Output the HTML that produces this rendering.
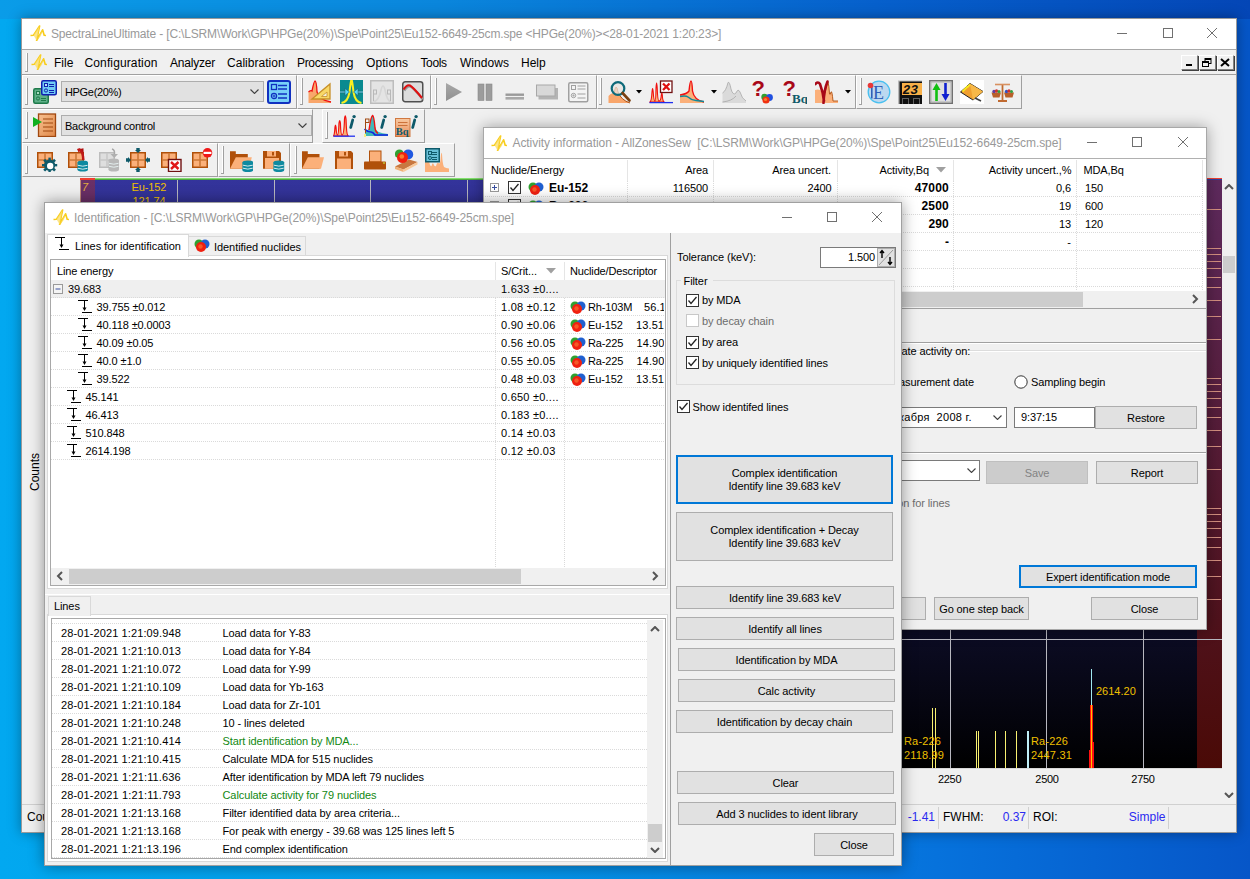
<!DOCTYPE html><html><head><meta charset="utf-8"><style>
html,body{margin:0;padding:0;}body{width:1250px;height:879px;overflow:hidden;position:relative;font-family:"Liberation Sans",sans-serif;background:linear-gradient(90deg,#02a8f0 0%,#049ae8 35%,#0672dc 75%,#0656c8 100%);}
div,span,svg{position:absolute;box-sizing:border-box;}span{white-space:pre;}
</style></head><body>
<div style="left:0;top:0;width:1250px;height:19px;background:linear-gradient(90deg,#0a9ce8 0%,#0a86dc 35%,#0660cc 70%,#0446b6 100%)"></div>
<div style="left:21px;top:18px;width:1216px;height:815px;background:#f0f0f0;box-shadow:0 0 12px rgba(0,0,0,0.35)"></div>
<div style="left:21px;top:18px;width:1216px;height:815px;border:1px solid #9a9a9a;box-sizing:border-box;background:transparent"></div>
<div style="left:22px;top:19px;width:1214px;height:30px;background:#fff"></div>
<div style="left:22px;top:49px;width:1214px;height:1px;background:#a8a8a8"></div>
<svg style="left:30px;top:25px;" width="16" height="16" viewBox="0 0 16 16"><path d="M0.5 10.5 L3.5 10.2 L9.6 1 L6.6 15.5 L12.6 4.8 L14.2 10.2 L16 10.5" fill="none" stroke="#f8cc18" stroke-width="1.6" stroke-linejoin="round"/><path d="M3.5 10.2 L9.6 1 L6.6 15.5 Z" fill="#fbe070" fill-opacity="0.8"/><path d="M6.6 15.5 L12.6 4.8 L11 11 Z" fill="#fbe070" fill-opacity="0.6"/></svg>
<span style="left:51.00px;top:27.00px;font-size:12px;line-height:14px;color:#999999;letter-spacing:-0.159px;">SpectraLineUltimate - [C:\LSRM\Work\GP\HPGe(20%)\Spe\Point25\Eu152-6649-25cm.spe &lt;HPGe(20%)&gt;&lt;28-01-2021 1:20:23&gt;]</span>
<svg style="left:1117px;top:33px;" width="11" height="2" viewBox="0 0 11 2"><path d="M0 0.5 H10" stroke="#707070" stroke-width="1"/></svg>
<svg style="left:1163px;top:28px;" width="11" height="11" viewBox="0 0 11 11"><rect x="0.5" y="0.5" width="9" height="9" fill="none" stroke="#707070" stroke-width="1"/></svg>
<svg style="left:1207px;top:28px;" width="11" height="11" viewBox="0 0 11 11"><path d="M0 0 L10 10 M10 0 L0 10" stroke="#707070" stroke-width="1"/></svg>
<div style="left:22px;top:50px;width:1214px;height:24px;background:#f0f0f0"></div>
<div style="left:22px;top:74px;width:1214px;height:1px;background:#a0a0a0"></div>
<div style="left:26px;top:53px;width:1px;height:19px;background:#ffffff"></div>
<div style="left:27px;top:53px;width:1px;height:19px;background:#a0a0a0"></div>
<div style="left:25px;top:71px;width:3px;height:1px;background:#a0a0a0"></div>
<svg style="left:31px;top:54px;" width="16" height="16" viewBox="0 0 16 16"><path d="M0.5 10.5 L3.5 10.2 L9.6 1 L6.6 15.5 L12.6 4.8 L14.2 10.2 L16 10.5" fill="none" stroke="#f8cc18" stroke-width="1.6" stroke-linejoin="round"/><path d="M3.5 10.2 L9.6 1 L6.6 15.5 Z" fill="#fbe070" fill-opacity="0.8"/><path d="M6.6 15.5 L12.6 4.8 L11 11 Z" fill="#fbe070" fill-opacity="0.6"/></svg>
<span style="left:54.00px;top:56.00px;font-size:12px;line-height:14px;color:#000;letter-spacing:0.039px;">File</span>
<span style="left:84.50px;top:56.00px;font-size:12px;line-height:14px;color:#000;letter-spacing:0.125px;">Configuration</span>
<span style="left:170.00px;top:56.00px;font-size:12px;line-height:14px;color:#000;letter-spacing:-0.211px;">Analyzer</span>
<span style="left:227.00px;top:56.00px;font-size:12px;line-height:14px;color:#000;letter-spacing:0.020px;">Calibration</span>
<span style="left:297.00px;top:56.00px;font-size:12px;line-height:14px;color:#000;letter-spacing:-0.336px;">Processing</span>
<span style="left:366.00px;top:56.00px;font-size:12px;line-height:14px;color:#000;letter-spacing:0.094px;">Options</span>
<span style="left:420.50px;top:56.00px;font-size:12px;line-height:14px;color:#000;letter-spacing:-0.383px;">Tools</span>
<span style="left:460.00px;top:56.00px;font-size:12px;line-height:14px;color:#000;letter-spacing:0.045px;">Windows</span>
<span style="left:521.00px;top:56.00px;font-size:12px;line-height:14px;color:#000;letter-spacing:-0.022px;">Help</span>
<div style="left:1181px;top:55px;width:17px;height:15px;background:#f0f0f0;border-top:1px solid #fff;border-left:1px solid #fff;border-right:1px solid #808080;border-bottom:1px solid #808080;box-sizing:border-box;box-shadow:1px 1px 0 #404040"></div>
<div style="left:1199px;top:55px;width:17px;height:15px;background:#f0f0f0;border-top:1px solid #fff;border-left:1px solid #fff;border-right:1px solid #808080;border-bottom:1px solid #808080;box-sizing:border-box;box-shadow:1px 1px 0 #404040"></div>
<div style="left:1217px;top:55px;width:17px;height:15px;background:#f0f0f0;border-top:1px solid #fff;border-left:1px solid #fff;border-right:1px solid #808080;border-bottom:1px solid #808080;box-sizing:border-box;box-shadow:1px 1px 0 #404040"></div>
<svg style="left:1185px;top:59px;" width="9" height="8" viewBox="0 0 9 8"><rect x="1" y="5" width="6" height="2" fill="#000"/></svg>
<svg style="left:1202px;top:58px;" width="10" height="10" viewBox="0 0 10 10"><rect x="3" y="0.5" width="6" height="5" fill="none" stroke="#000"/><rect x="3" y="0.5" width="6" height="1.5" fill="#000"/><rect x="0.5" y="3.5" width="6" height="5" fill="#f0f0f0" stroke="#000"/><rect x="0.5" y="3.5" width="6" height="1.5" fill="#000"/></svg>
<svg style="left:1220px;top:58px;" width="10" height="9" viewBox="0 0 10 9"><path d="M1 1 L9 8 M9 1 L1 8" stroke="#000" stroke-width="2"/></svg>
<div style="left:22px;top:75px;width:1214px;height:102px;background:#f0f0f0"></div>
<div style="left:22px;top:75px;width:275px;height:34px;background:#f0f0f0;border-top:1px solid #fff;border-left:1px solid #fff;border-right:1px solid #a0a0a0;border-bottom:1px solid #a0a0a0;box-sizing:border-box"></div>
<div style="left:297px;top:75px;width:134px;height:34px;background:#f0f0f0;border-top:1px solid #fff;border-left:1px solid #fff;border-right:1px solid #a0a0a0;border-bottom:1px solid #a0a0a0;box-sizing:border-box"></div>
<div style="left:431px;top:75px;width:166px;height:34px;background:#f0f0f0;border-top:1px solid #fff;border-left:1px solid #fff;border-right:1px solid #a0a0a0;border-bottom:1px solid #a0a0a0;box-sizing:border-box"></div>
<div style="left:597px;top:75px;width:259px;height:34px;background:#f0f0f0;border-top:1px solid #fff;border-left:1px solid #fff;border-right:1px solid #a0a0a0;border-bottom:1px solid #a0a0a0;box-sizing:border-box"></div>
<div style="left:856px;top:75px;width:166px;height:34px;background:#f0f0f0;border-top:1px solid #fff;border-left:1px solid #fff;border-right:1px solid #a0a0a0;border-bottom:1px solid #a0a0a0;box-sizing:border-box"></div>
<div style="left:22px;top:109px;width:291px;height:34px;background:#f0f0f0;border-top:1px solid #fff;border-left:1px solid #fff;border-right:1px solid #a0a0a0;border-bottom:1px solid #a0a0a0;box-sizing:border-box"></div>
<div style="left:322px;top:109px;width:103px;height:34px;background:#f0f0f0;border-top:1px solid #fff;border-left:1px solid #fff;border-right:1px solid #a0a0a0;border-bottom:1px solid #a0a0a0;box-sizing:border-box"></div>
<div style="left:22px;top:143px;width:196px;height:34px;background:#f0f0f0;border-top:1px solid #fff;border-left:1px solid #fff;border-right:1px solid #a0a0a0;border-bottom:1px solid #a0a0a0;box-sizing:border-box"></div>
<div style="left:218px;top:143px;width:72px;height:34px;background:#f0f0f0;border-top:1px solid #fff;border-left:1px solid #fff;border-right:1px solid #a0a0a0;border-bottom:1px solid #a0a0a0;box-sizing:border-box"></div>
<div style="left:290px;top:143px;width:165px;height:34px;background:#f0f0f0;border-top:1px solid #fff;border-left:1px solid #fff;border-right:1px solid #a0a0a0;border-bottom:1px solid #a0a0a0;box-sizing:border-box"></div>
<div style="left:26px;top:78px;width:1px;height:27px;background:#ffffff"></div>
<div style="left:27px;top:78px;width:1px;height:27px;background:#a0a0a0"></div>
<div style="left:25px;top:104px;width:3px;height:1px;background:#a0a0a0"></div>
<div style="left:301px;top:78px;width:1px;height:27px;background:#ffffff"></div>
<div style="left:302px;top:78px;width:1px;height:27px;background:#a0a0a0"></div>
<div style="left:300px;top:104px;width:3px;height:1px;background:#a0a0a0"></div>
<div style="left:435px;top:78px;width:1px;height:27px;background:#ffffff"></div>
<div style="left:436px;top:78px;width:1px;height:27px;background:#a0a0a0"></div>
<div style="left:434px;top:104px;width:3px;height:1px;background:#a0a0a0"></div>
<div style="left:600px;top:78px;width:1px;height:27px;background:#ffffff"></div>
<div style="left:601px;top:78px;width:1px;height:27px;background:#a0a0a0"></div>
<div style="left:599px;top:104px;width:3px;height:1px;background:#a0a0a0"></div>
<div style="left:860px;top:78px;width:1px;height:27px;background:#ffffff"></div>
<div style="left:861px;top:78px;width:1px;height:27px;background:#a0a0a0"></div>
<div style="left:859px;top:104px;width:3px;height:1px;background:#a0a0a0"></div>
<div style="left:26px;top:112px;width:1px;height:27px;background:#ffffff"></div>
<div style="left:27px;top:112px;width:1px;height:27px;background:#a0a0a0"></div>
<div style="left:25px;top:138px;width:3px;height:1px;background:#a0a0a0"></div>
<div style="left:326px;top:112px;width:1px;height:27px;background:#ffffff"></div>
<div style="left:327px;top:112px;width:1px;height:27px;background:#a0a0a0"></div>
<div style="left:325px;top:138px;width:3px;height:1px;background:#a0a0a0"></div>
<div style="left:26px;top:146px;width:1px;height:28px;background:#ffffff"></div>
<div style="left:27px;top:146px;width:1px;height:28px;background:#a0a0a0"></div>
<div style="left:25px;top:173px;width:3px;height:1px;background:#a0a0a0"></div>
<div style="left:222px;top:146px;width:1px;height:28px;background:#ffffff"></div>
<div style="left:223px;top:146px;width:1px;height:28px;background:#a0a0a0"></div>
<div style="left:221px;top:173px;width:3px;height:1px;background:#a0a0a0"></div>
<div style="left:295px;top:146px;width:1px;height:28px;background:#ffffff"></div>
<div style="left:296px;top:146px;width:1px;height:28px;background:#a0a0a0"></div>
<div style="left:294px;top:173px;width:3px;height:1px;background:#a0a0a0"></div>
<svg style="left:33px;top:80px;" width="24" height="24" viewBox="0 0 24 24"><rect x="0.75" y="8.75" width="14.5" height="14.5" rx="1.5" fill="#5fb088" stroke="#1e7a4a" stroke-width="1.5"/><rect x="3.5" y="11.5" width="3" height="3" fill="#a8dcc0" stroke="#1e7a4a" stroke-width="1"/><circle cx="5" cy="18.5" r="1.6" fill="none" stroke="#1e7a4a" stroke-width="1"/><path d="M8 18.5 H13 M8 20.5 H13" stroke="#1e7a4a" stroke-width="1"/><rect x="8.75" y="0.75" width="14.5" height="14" rx="1.5" fill="#70ccf4" stroke="#1020b0" stroke-width="1.5"/><rect x="11.5" y="3.5" width="3" height="3" fill="#b8e4f8" stroke="#1020b0" stroke-width="1"/><circle cx="13" cy="10.5" r="1.6" fill="none" stroke="#1020b0" stroke-width="1"/><path d="M16 4.5 H21 M16 6.5 H21 M16 10.5 H21 M16 12.5 H21" stroke="#1020b0" stroke-width="1"/></svg>
<div style="left:61px;top:81px;width:203px;height:21px;background:#e1e1e1;border:1px solid #adadad;box-sizing:border-box"></div>
<span style="left:65.00px;top:84.50px;font-size:11px;line-height:14px;color:#000;letter-spacing:-0.330px;">HPGe(20%)</span>
<svg style="left:250px;top:89px;" width="9" height="5" viewBox="0 0 9 5"><path d="M0.5 0.5 L4.5 4.5 L8.5 0.5" fill="none" stroke="#404040" stroke-width="1.1"/></svg>
<svg style="left:267px;top:80px;" width="24" height="24" viewBox="0 0 24 24"><rect x="1" y="1" width="22" height="22" rx="2" fill="#78d0f8" stroke="#1030c0" stroke-width="2"/><rect x="4.5" y="4.5" width="5" height="5" fill="none" stroke="#1030c0" stroke-width="1.3"/><circle cx="7" cy="16" r="2.6" fill="none" stroke="#1030c0" stroke-width="1.2"/><path d="M5.5 16 H8.5 M7 14.5 V17.5" stroke="#1030c0" stroke-width="0.9"/><path d="M11 5.5 H20 M11 9 H20 M11 14 H20 M11 18 H20" stroke="#1030c0" stroke-width="1.5"/></svg>
<svg style="left:308px;top:80px;" width="24" height="24" viewBox="0 0 24 24"><path d="M0.5 23 L0.5 12 Q3 10 4 11 Q6 1 7 1 Q8.5 1 9 12 Q11 20 23 22 L23 23 Z" fill="#f9a66b"/><path d="M0.5 12 Q3 10 4 11 Q6 1 7 1 Q8.5 1 9 12 Q11 20 23 22" fill="none" stroke="#f01010" stroke-width="1.3"/><path d="M4 19 L22 4 L22 19 Z" fill="#f8d868" stroke="#c89028" stroke-width="1.3"/><path d="M13.5 16.5 L19 12 L19 16.5 Z" fill="#f4f0e0" stroke="#c89028" stroke-width="0.8"/></svg>
<svg style="left:340px;top:80px;" width="24" height="24" viewBox="0 0 24 24"><rect x="0" y="0" width="23" height="24" fill="#0a8a90"/><path d="M1.5 23 Q8 22 9.5 12 Q11 -1 11.5 0 Q12 -1 13.5 12 Q15 22 21.5 23" fill="none" stroke="#f8f020" stroke-width="2"/><path d="M0 12 H7" stroke="#404040" stroke-width="2.2"/><path d="M0 12 H7" stroke="#50d8f8" stroke-width="1.3"/><path d="M5 8.5 L9.5 12 L5 15.5 Z" fill="#50d8f8" stroke="#305060" stroke-width="0.5"/><path d="M16 12 H23" stroke="#404040" stroke-width="2.2"/><path d="M16 12 H23" stroke="#50d8f8" stroke-width="1.3"/><path d="M18 8.5 L13.5 12 L18 15.5 Z" fill="#50d8f8" stroke="#305060" stroke-width="0.5"/></svg>
<svg style="left:370px;top:80px;" width="24" height="24" viewBox="0 0 24 24"><rect x="0.75" y="0.75" width="22.5" height="22.5" fill="#e4e4e4" stroke="#bdbdbd" stroke-width="1.5"/><path d="M3 22 Q9 21 11 10 Q13 2 15 10 Q17 21 21 22" fill="none" stroke="#d6d6d6" stroke-width="1.6"/><path d="M3.5 10 V21 M20.5 10 V21" stroke="#b8b8b8"/><rect x="3.5" y="10" width="3" height="4" fill="none" stroke="#b8b8b8"/><rect x="17.5" y="10" width="3" height="4" fill="none" stroke="#b8b8b8"/></svg>
<svg style="left:401px;top:80px;" width="24" height="24" viewBox="0 0 24 24"><rect x="1.75" y="1.75" width="20" height="20" rx="2.5" fill="#dcdcdc" stroke="#505050" stroke-width="1.5"/><path d="M2.5 9.5 Q6 4 9 5.5 Q12 7 21 18" fill="none" stroke="#9a9a9a" stroke-width="2.4" transform="translate(0.8,1.2)"/><path d="M2.5 9.5 Q6 4 9 5.5 Q12 7 21 18" fill="none" stroke="#e01010" stroke-width="2"/></svg>
<svg style="left:443px;top:80px;" width="24" height="24" viewBox="0 0 24 24"><defs><linearGradient id="gp" x1="0" y1="0" x2="0" y2="1"><stop offset="0" stop-color="#a8a8a8"/><stop offset="1" stop-color="#909090"/></linearGradient></defs><path d="M3 3 L19 12 L3 21 Z" fill="url(#gp)"/></svg>
<svg style="left:473px;top:80px;" width="24" height="24" viewBox="0 0 24 24"><rect x="5" y="4" width="6" height="16.5" fill="#9c9c9c" stroke="#8a8a8a" stroke-width="0.6"/><rect x="13" y="4" width="6" height="16.5" fill="#9c9c9c" stroke="#8a8a8a" stroke-width="0.6"/></svg>
<svg style="left:500px;top:78px;" width="24" height="24" viewBox="0 0 24 24"><rect x="5.5" y="15.5" width="20" height="2.4" fill="#9a9a9a"/><rect x="5.5" y="19" width="20" height="2.6" fill="#a8a8a8"/></svg>
<svg style="left:536px;top:80px;" width="24" height="24" viewBox="0 0 24 24"><rect x="2.5" y="8" width="19.5" height="11.5" fill="#b4b4b4"/><rect x="0.5" y="5" width="18.5" height="11" fill="#d8d8d8" stroke="#a8a8a8" stroke-width="1"/></svg>
<svg style="left:566px;top:80px;" width="24" height="24" viewBox="0 0 24 24"><rect x="2.75" y="2.75" width="19" height="19" rx="1.5" fill="#f4f4f4" stroke="#a0a0a0" stroke-width="1.5"/><rect x="5.5" y="5.5" width="4" height="4" fill="none" stroke="#a0a0a0"/><circle cx="7.5" cy="15.5" r="2.2" fill="none" stroke="#a0a0a0"/><path d="M6.3 15.5 H8.7 M7.5 14.3 V16.7" stroke="#a0a0a0" stroke-width="0.7"/><path d="M11.5 6 H19.5 M11.5 9 H19.5 M11.5 14 H19.5 M11.5 18 H19.5" stroke="#a0a0a0"/></svg>
<svg style="left:608px;top:80px;" width="24" height="24" viewBox="0 0 24 24"><path d="M0.5 23 L0.5 16 Q4 12 6 14 Q8 1 10 12 Q13 20 22 23 Z" fill="#f9a66b"/><path d="M6 14 Q8 1 10 12 Q13 20 22 23" fill="none" stroke="#b05010" stroke-width="1"/><circle cx="10" cy="8.5" r="6.3" fill="#e8e4e0" fill-opacity="0.75" stroke="#0e6a7a" stroke-width="2.2"/><path d="M14.5 13 L21.5 20.5" stroke="#7a4010" stroke-width="2.6" stroke-linecap="round"/></svg>
<svg style="left:636px;top:90px;" width="6" height="4" viewBox="0 0 6 4"><path d="M0 0 H6 L3 3.5 Z" fill="#000"/></svg>
<svg style="left:649px;top:80px;" width="24" height="24" viewBox="0 0 24 24"><path d="M1 22 Q2.5 21 3 12 Q3.6 5 4.2 12 Q4.8 21 6 21 Q6.8 21 7 8 Q7.6 -2 8.2 8 Q8.7 21 10 21 Q12 21 12.3 15 Q12.8 11 13.3 15 Q13.6 21 15 22 Z" fill="#f9b070" stroke="#f01010" stroke-width="1.1"/><path d="M0.5 22.6 H24" stroke="#2030f0" stroke-width="1.3"/><rect x="11.5" y="1" width="11.5" height="11.5" fill="#fff" stroke="#701010" stroke-width="1.3"/><path d="M14 3.5 L20.5 10 M20.5 3.5 L14 10" stroke="#e01010" stroke-width="2.3"/></svg>
<svg style="left:680px;top:80px;" width="24" height="24" viewBox="0 0 24 24"><path d="M0 23 L0 15 Q7 14 9 11 Q10 1 11 1 Q12 1 12.5 11 Q14 20 24 22 L24 23 Z" fill="#fbb07a"/><path d="M0 15 Q7 14 9 11 Q10 1 11 1 Q12 1 12.5 11 Q14 20 24 22" fill="none" stroke="#f01010" stroke-width="1.4"/><path d="M0 16.5 Q6 15.5 8 17 Q11 20 16 20.5 Q20 21 24 21.5" fill="none" stroke="#108a9a" stroke-width="1.5"/></svg>
<svg style="left:711px;top:90px;" width="6" height="4" viewBox="0 0 6 4"><path d="M0 0 H6 L3 3.5 Z" fill="#000"/></svg>
<svg style="left:722px;top:80px;" width="24" height="24" viewBox="0 0 24 24"><path d="M0.5 23 L0.5 13 Q4 11 6 2.5 Q7.5 1 9 9 Q11 16 14 13 Q16 8 18 12 Q20 19 24 21 L24 23 Z" fill="#dadada"/><path d="M0.5 13 Q4 11 6 2.5 Q7.5 1 9 9 Q11 16 14 13 Q16 8 18 12 Q20 19 24 21" fill="none" stroke="#a8a8a8" stroke-width="0.8"/><path d="M0.5 22 Q10 21 14 16" fill="none" stroke="#a8a8a8" stroke-width="0.8"/></svg>
<svg style="left:752px;top:80px;" width="24" height="24" viewBox="0 0 24 24"><text x="-0.5" y="16" font-family="Liberation Sans" font-weight="bold" font-size="22" fill="#a80818">?</text><circle cx="12.5" cy="17" r="3.2" fill="#30a030"/><circle cx="17.5" cy="17.5" r="3.4" fill="#2050e0"/><circle cx="14" cy="20" r="3.6" fill="#f03010"/><circle cx="13.5" cy="19.5" r="1.6" fill="#f88030"/></svg>
<svg style="left:783px;top:80px;" width="24" height="24" viewBox="0 0 24 24"><text x="-0.5" y="16" font-family="Liberation Sans" font-weight="bold" font-size="22" fill="#a80818">?</text><text x="9" y="23" font-family="Liberation Serif" font-weight="bold" font-size="13" fill="#0e5a6a">Bq</text></svg>
<svg style="left:815px;top:80px;" width="24" height="24" viewBox="0 0 24 24"><path d="M0 23 L0 10 Q3 9 5 10 Q7 12 8 14 Q10 13 11 12 Q12 4 13 2 Q14 5 14.5 14 Q15 16 16 12 Q17 10 18 21 L23 21 L23 23 Z" fill="#fbb07a"/><path d="M10 13 Q12 4 13 2 Q14 5 14.5 14 Q15 16 16 12 Q17 10 18 21 L23 21" fill="none" stroke="#b05010" stroke-width="0.9"/><path d="M0.5 4 Q3 1 5 4 Q8 12 9 21 M12.5 1.5 Q9 10 8.5 23" fill="none" stroke="#a80818" stroke-width="2.6" stroke-linecap="round"/></svg>
<svg style="left:845px;top:90px;" width="6" height="4" viewBox="0 0 6 4"><path d="M0 0 H6 L3 3.5 Z" fill="#000"/></svg>
<svg style="left:867px;top:80px;" width="24" height="24" viewBox="0 0 24 24"><circle cx="12" cy="12" r="10.8" fill="#bcd8f0" stroke="#48c0f0" stroke-width="1.3"/><text x="6" y="19" font-family="Liberation Serif" font-size="18" fill="#2e60b8">E</text><path d="M4.8 6 V18.5" stroke="#2e60b8" stroke-width="1.6"/><circle cx="3.5" cy="5.5" r="2.8" fill="#e83838"/></svg>
<svg style="left:898px;top:80px;" width="24" height="24" viewBox="0 0 24 24"><rect x="0" y="0.5" width="24" height="23.5" fill="#b8b8b8"/><rect x="1.5" y="1.5" width="22.5" height="22.5" fill="#101010"/><rect x="4" y="3" width="20" height="12" fill="#f8b048"/><text x="4.5" y="13.5" font-family="Liberation Mono" font-style="italic" font-weight="bold" font-size="13" fill="#101010">23</text><rect x="4" y="18" width="7" height="6" fill="#606060"/><rect x="15" y="18" width="7" height="6" fill="#606060"/><rect x="5" y="19" width="5" height="5" fill="#101010"/><rect x="16" y="19" width="5" height="5" fill="#101010"/></svg>
<svg style="left:929px;top:80px;" width="24" height="24" viewBox="0 0 24 24"><rect x="0.75" y="0.75" width="22.5" height="22.5" fill="#e0e0e0" stroke="#707070" stroke-width="1.5"/><rect x="2" y="2" width="20" height="20" fill="none" stroke="#b0b0b0"/><path d="M7.5 21 V9" stroke="#10c010" stroke-width="2.6"/><path d="M3.5 10 L7.5 3 L11.5 10 Z" fill="#10c010"/><path d="M16.5 3 V15" stroke="#1020d0" stroke-width="2.6"/><path d="M12.5 14 L16.5 21 L20.5 14 Z" fill="#1020d0"/></svg>
<svg style="left:960px;top:80px;" width="24" height="24" viewBox="0 0 24 24"><rect x="0" y="0" width="24" height="24" fill="#fff"/><path d="M0.5 12 L10 3.5 L23 11.5 L13 20 Z" fill="#f0a030" stroke="#202020" stroke-width="1"/><path d="M10 3.5 L23 11.5 L13 20 Z" fill="#f8b848"/><path d="M2.5 11.5 L5.5 8.5 M4.5 9.5 L7.5 6.5 M7 7.5 L10 4.5" stroke="#f8e820" stroke-width="1.8"/><path d="M15 18 L21 21" stroke="#404040" stroke-width="1.6"/></svg>
<svg style="left:991px;top:80px;" width="24" height="24" viewBox="0 0 24 24"><path d="M11.5 5 V20" stroke="#c06a30" stroke-width="1.8"/><path d="M4 4.5 H19" stroke="#d89060" stroke-width="1.6"/><path d="M7 21 H16" stroke="#c06a30" stroke-width="2"/><path d="M0.5 12.5 H10 L8.5 17.5 H2 Z M13 12.5 H23 L21.5 17.5 H14.5 Z" fill="#b8602a"/><circle cx="3" cy="11.5" r="1.7" fill="#6040a0"/><circle cx="5.5" cy="11" r="1.7" fill="#d03030"/><circle cx="8" cy="11.5" r="1.5" fill="#30a040"/><circle cx="15.5" cy="11.5" r="1.7" fill="#3050c0"/><circle cx="18" cy="11" r="1.7" fill="#d03030"/><circle cx="20.5" cy="11.5" r="1.5" fill="#30a040"/></svg>
<svg style="left:33px;top:113px;" width="24" height="24" viewBox="0 0 24 24"><defs><linearGradient id="gd" x1="0" y1="0" x2="1" y2="1"><stop offset="0" stop-color="#f8c090"/><stop offset="1" stop-color="#e08848"/></linearGradient></defs><rect x="5.5" y="1" width="17" height="22.5" fill="url(#gd)" stroke="#a04810" stroke-width="1.3"/><path d="M10 6 H20 M10 10 H20 M10 14 H20 M10 18 H20" stroke="#a04810" stroke-width="1.2"/><path d="M0 4 L9 9 L0 14 Z" fill="#10b020"/></svg>
<div style="left:61px;top:115px;width:251px;height:21px;background:#e1e1e1;border:1px solid #adadad;box-sizing:border-box"></div>
<span style="left:65.00px;top:118.50px;font-size:11px;line-height:14px;color:#000;letter-spacing:-0.263px;">Background control</span>
<svg style="left:298px;top:123px;" width="9" height="5" viewBox="0 0 9 5"><path d="M0.5 0.5 L4.5 4.5 L8.5 0.5" fill="none" stroke="#404040" stroke-width="1.1"/></svg>
<svg style="left:333px;top:113px;" width="24" height="24" viewBox="0 0 24 24"><path d="M0.5 23 Q1.5 22 2 14 Q2.5 10 3 14 Q3.5 22 4.5 22 Q5.5 22 6 10 Q6.7 5 7.4 10 Q7.8 22 9 22 Q11 22 11.5 6 Q12.3 -0.5 13 6 Q13.5 22 15 22.5 L15 23 Z" fill="#fbb070" stroke="#f01010" stroke-width="1.2"/><path d="M0.5 23.2 H22" stroke="#2030f0" stroke-width="1.3"/><circle cx="21.1" cy="3.6" r="1.7" fill="#0e5a6a"/><path d="M19.7 7 L17.7 14.5" stroke="#0e5a6a" stroke-width="2.8" stroke-linecap="round"/></svg>
<svg style="left:364px;top:113px;" width="24" height="24" viewBox="0 0 24 24"><path d="M1 23 L1 18 Q5 17 6 15 Q7 3 8.6 2.5 Q10 3 11 15 Q12 20 24 21 L24 23 Z" fill="#40b8b8"/><path d="M5 17 Q7 3 8.6 2.5 Q10 3 11 15 Q12 20 14 20" fill="none" stroke="#f01010" stroke-width="1.4"/><path d="M0.5 16 Q4 19 7 19 Q9 19 11 22 H24" fill="none" stroke="#1020e0" stroke-width="1.6"/><path d="M1.5 6 V20" stroke="#a04810" stroke-width="1"/><rect x="1.5" y="6" width="3.5" height="3.5" fill="none" stroke="#a04810" stroke-width="1"/><rect x="0" y="21" width="2" height="3" fill="#f8f080"/><circle cx="21.1" cy="3.6" r="1.7" fill="#0e5a6a"/><path d="M19.7 7 L17.7 14.5" stroke="#0e5a6a" stroke-width="2.8" stroke-linecap="round"/></svg>
<svg style="left:395px;top:113px;" width="24" height="24" viewBox="0 0 24 24"><defs><linearGradient id="gb" x1="0" y1="0" x2="0" y2="1"><stop offset="0" stop-color="#f8c8a0"/><stop offset="1" stop-color="#e89060"/></linearGradient></defs><rect x="0.5" y="5.5" width="14.5" height="18" fill="url(#gb)" stroke="#d07840" stroke-width="1"/><path d="M3 9.5 H12.5 M3 12.5 H12.5" stroke="#c86a30" stroke-width="0.9"/><text x="0.8" y="22" font-family="Liberation Serif" font-weight="bold" font-size="10.5" fill="#0e5a6a">Bq</text><circle cx="21.1" cy="3.6" r="1.7" fill="#0e5a6a"/><path d="M19.7 7 L17.7 14.5" stroke="#0e5a6a" stroke-width="2.8" stroke-linecap="round"/></svg>
<svg style="left:35px;top:148px;" width="24" height="24" viewBox="0 0 24 24"><rect x="2.75" y="4.75" width="14.5" height="14.5" fill="#fbb07a" stroke="#b0500a" stroke-width="1.5"/><path d="M10 5 V19 M3 12 H17" stroke="#cc7838" stroke-width="1.6"/><g fill="#0e5a6a"><circle cx="14.6" cy="17.2" r="5.6"/><rect x="13.4" y="9.6" width="2.4" height="3"/><rect x="13.4" y="21.8" width="2.4" height="2.2"/><rect x="7" y="16" width="3" height="2.4"/><rect x="19.2" y="16" width="3" height="2.4"/><rect x="8.8" y="11.4" width="2.6" height="2.6" transform="rotate(45 10.1 12.7)"/><rect x="17.8" y="11.4" width="2.6" height="2.6" transform="rotate(45 19.1 12.7)"/><rect x="8.8" y="20.4" width="2.6" height="2.6" transform="rotate(45 10.1 21.7)"/><rect x="17.8" y="20.4" width="2.6" height="2.6" transform="rotate(45 19.1 21.7)"/></g><circle cx="15.2" cy="18" r="3.2" fill="#fff"/></svg>
<svg style="left:66px;top:148px;" width="24" height="24" viewBox="0 0 24 24"><rect x="2.75" y="4.75" width="14.5" height="14.5" fill="#fbb07a" stroke="#b0500a" stroke-width="1.5"/><path d="M10 5 V19 M3 12 H17" stroke="#cc7838" stroke-width="1.6"/><path d="M12 2.5 L16.5 1.5 L17 12" fill="none" stroke="#b01010" stroke-width="2"/><path d="M11 1 L14.5 0 L13 5 Z" fill="#c01010"/><path d="M12.5 1.5 Q17 3 17.5 12" fill="none" stroke="#c01818" stroke-width="2.2"/><g transform="translate(11.5,12.5)"><rect x="0" y="2" width="10.5" height="7" fill="#0e8aa0"/><ellipse cx="5.25" cy="2" rx="5.25" ry="2" fill="#0e8aa0"/><ellipse cx="5.25" cy="9" rx="5.25" ry="2" fill="#0e8aa0"/><path d="M0.5 4.8 Q5.25 6.6 10.0 4.8 M0.5 7.8 Q5.25 9.6 10.0 7.8" stroke="#e8f4f4" stroke-width="0.9" fill="none"/></g></svg>
<svg style="left:97px;top:148px;" width="24" height="24" viewBox="0 0 24 24"><rect x="2.75" y="4.75" width="14.5" height="14.5" fill="#dedede" stroke="#bdbdbd" stroke-width="1.5"/><path d="M10 5 V19 M3 12 H17" stroke="#c8c8c8" stroke-width="1.6"/><g transform="translate(11.5,10.5)"><rect x="0" y="2" width="10.5" height="9" fill="#b8b8b8"/><ellipse cx="5.25" cy="2" rx="5.25" ry="2" fill="#b8b8b8"/><ellipse cx="5.25" cy="11" rx="5.25" ry="2" fill="#b8b8b8"/><path d="M0.5 4.8 Q5.25 6.6 10.0 4.8 M0.5 7.8 Q5.25 9.6 10.0 7.8" stroke="#e8f4f4" stroke-width="0.9" fill="none"/></g><path d="M15 1 Q18 2 17.5 6" stroke="#a8a8a8" fill="none" stroke-width="1.4"/><path d="M13.5 6 H21 L17.3 10 Z" fill="#b0b0b0"/></svg>
<svg style="left:126px;top:148px;" width="24" height="24" viewBox="0 0 24 24"><rect x="4.75" y="4.75" width="14.5" height="14.5" fill="#fbb07a" stroke="#b0500a" stroke-width="1.5"/><path d="M12 5 V19 M5 12 H19" stroke="#cc7838" stroke-width="1.6"/><g fill="#0e5a6a"><path d="M10.3 0 H13.7 V2 L15 2 L12 5 L9 2 H10.3 Z"/><path d="M10.3 24 H13.7 V22 L15 22 L12 19 L9 22 H10.3 Z"/><path d="M0 10.3 V13.7 H2 L2 15 L5 12 L2 9 V10.3 Z"/><path d="M24 10.3 V13.7 H22 L22 15 L19 12 L22 9 V10.3 Z"/></g></svg>
<svg style="left:159px;top:148px;" width="24" height="24" viewBox="0 0 24 24"><rect x="2.75" y="4.75" width="14.5" height="14.5" fill="#fbb07a" stroke="#b0500a" stroke-width="1.5"/><path d="M10 5 V19 M3 12 H17" stroke="#cc7838" stroke-width="1.6"/><rect x="9.5" y="11.5" width="12.5" height="12" fill="#fff" stroke="#701010" stroke-width="1.4"/><path d="M12 14 L19.5 21 M19.5 14 L12 21" stroke="#e01818" stroke-width="2.4"/></svg>
<svg style="left:190px;top:148px;" width="24" height="24" viewBox="0 0 24 24"><rect x="2.75" y="4.75" width="14.5" height="14.5" fill="#fbb07a" stroke="#b0500a" stroke-width="1.5"/><path d="M10 5 V19 M3 12 H17" stroke="#cc7838" stroke-width="1.6"/><circle cx="17.5" cy="4.8" r="4.8" fill="#f01818"/><rect x="13.6" y="3.8" width="7.8" height="2.2" fill="#fff"/></svg>
<svg style="left:229px;top:150px;" width="24" height="24" viewBox="0 0 24 24"><path d="M1 1.2 H6.8 V4 H18.8 V18.8 H1 Z" fill="#b0500a"/><path d="M6.8 7.2 H22.8 L20 18.8 H1 Z" fill="#fbb07a"/><g transform="translate(13.4,10.4)"><rect x="0" y="2" width="10.8" height="7.6" fill="#0e8aa0"/><ellipse cx="5.4" cy="2" rx="5.4" ry="2" fill="#0e8aa0"/><ellipse cx="5.4" cy="9.6" rx="5.4" ry="2" fill="#0e8aa0"/><path d="M0.5 4.8 Q5.4 6.6 10.3 4.8 M0.5 7.8 Q5.4 9.6 10.3 7.8" stroke="#e8f4f4" stroke-width="0.9" fill="none"/></g></svg>
<svg style="left:262px;top:150px;" width="24" height="24" viewBox="0 0 24 24"><path d="M1 1 H17 L19 3 V18.8 H1 Z" fill="#b0500a"/><rect x="5" y="1" width="9" height="5.5" fill="#fbb07a"/><rect x="10" y="2" width="2" height="3.5" fill="#b0500a"/><rect x="3" y="8" width="14" height="10.8" fill="#fbb07a"/><g transform="translate(11.4,10.4)"><rect x="0" y="2" width="10.8" height="7.6" fill="#0e8aa0"/><ellipse cx="5.4" cy="2" rx="5.4" ry="2" fill="#0e8aa0"/><ellipse cx="5.4" cy="9.6" rx="5.4" ry="2" fill="#0e8aa0"/><path d="M0.5 4.8 Q5.4 6.6 10.3 4.8 M0.5 7.8 Q5.4 9.6 10.3 7.8" stroke="#e8f4f4" stroke-width="0.9" fill="none"/></g></svg>
<svg style="left:301px;top:150px;" width="24" height="24" viewBox="0 0 24 24"><path d="M1 1.2 H6.8 V4 H18.5 V18.8 H1 Z" fill="#b0500a"/><path d="M6.8 7.2 H23 L20 18.8 H1 Z" fill="#fbb07a"/></svg>
<svg style="left:334px;top:150px;" width="24" height="24" viewBox="0 0 24 24"><path d="M1 1 H17 L19 3 V19 H1 Z" fill="#b0500a"/><rect x="5" y="1" width="9" height="5.5" fill="#fbb07a"/><rect x="10" y="2" width="2" height="3.5" fill="#b0500a"/><rect x="3" y="8.5" width="14" height="10.5" fill="#fbb07a"/></svg>
<svg style="left:364px;top:150px;" width="24" height="24" viewBox="0 0 24 24"><rect x="5.5" y="1" width="11.5" height="11" fill="#fbb07a" stroke="#b0500a" stroke-width="1"/><rect x="0" y="11.5" width="22" height="8" rx="0.8" fill="#b0500a"/><ellipse cx="20" cy="13" rx="1.2" ry="0.8" fill="#c8e040"/></svg>
<svg style="left:395px;top:148px;" width="24" height="24" viewBox="0 0 24 24"><path d="M0 18.5 L14 11.5 L22.5 14 L8.5 21.5 Z" fill="#c87840"/><path d="M0 18.5 L8.5 21.5 L8.5 24 L0 21 Z" fill="#f0b078"/><path d="M8.5 21.5 L22.5 14 L22.5 16.5 L8.5 24 Z" fill="#f8c898"/><circle cx="4.4" cy="5.9" r="4.5" fill="#30a030"/><circle cx="13.2" cy="6.4" r="5" fill="#2058e0"/><circle cx="7.5" cy="9.5" r="5.5" fill="#f02010"/><circle cx="6.8" cy="8.5" r="2.3" fill="#f88030"/></svg>
<svg style="left:425px;top:148px;" width="24" height="24" viewBox="0 0 24 24"><path d="M0 24 V13 H4 Q5 19 6.5 18 Q7.5 14 8.5 16 Q9.5 19 11 18 Q12 14 13.5 15 Q15 17 15.5 12 Q16.3 2 17 6 Q17.5 16 19 19 Q21 20 24 20.5 V24 Z" fill="#fbb07a"/><rect x="0.75" y="0.75" width="13.5" height="13" fill="#68c0d8" stroke="#0e5a6a" stroke-width="1.5"/><rect x="3.5" y="3.5" width="3" height="3" fill="none" stroke="#0e5a6a" stroke-width="1"/><circle cx="5" cy="10" r="1.5" fill="none" stroke="#0e5a6a" stroke-width="1"/><path d="M7 4.5 H12 M7 6.5 H12 M7 9.5 H12 M7 11.5 H12" stroke="#0e5a6a" stroke-width="1"/></svg>
<div style="left:22px;top:177px;width:1200px;height:627px;background:#f0f0f0"></div>
<div style="left:80px;top:178px;width:1142px;height:591px;background:linear-gradient(#34349c, #000)"></div>
<div style="left:80px;top:178px;width:15px;height:591px;background:linear-gradient(#6a3068,#4a0c10)"></div>
<div style="left:80px;top:180px;width:1px;height:589px;background:#c08878"></div>
<div style="left:1197px;top:178px;width:25px;height:591px;background:linear-gradient(#5e2a5e,#4a0a06)"></div>
<div style="left:80px;top:178px;width:15px;height:1px;background:#f04030"></div>
<div style="left:80px;top:179px;width:15px;height:1px;background:#f04030"></div>
<div style="left:95px;top:178px;width:1102px;height:1px;background:#84e070"></div>
<div style="left:95px;top:179px;width:1102px;height:1px;background:#50a840"></div>
<div style="left:1197px;top:178px;width:25px;height:1px;background:#f04030"></div>
<div style="left:1197px;top:179px;width:25px;height:1px;background:#3040a0"></div>
<div style="left:1197px;top:209px;width:24px;height:1px;background:#d49080"></div>
<div style="left:1197px;top:248px;width:24px;height:1px;background:#d49080"></div>
<div style="left:1197px;top:254px;width:24px;height:1px;background:#d49080"></div>
<div style="left:1197px;top:261px;width:24px;height:1px;background:#d49080"></div>
<div style="left:1197px;top:268px;width:24px;height:1px;background:#d49080"></div>
<div style="left:1197px;top:277px;width:24px;height:1px;background:#d49080"></div>
<div style="left:1197px;top:287px;width:24px;height:1px;background:#d49080"></div>
<div style="left:1197px;top:300px;width:24px;height:1px;background:#d49080"></div>
<div style="left:1197px;top:316px;width:24px;height:1px;background:#d49080"></div>
<div style="left:1197px;top:339px;width:24px;height:1px;background:#d49080"></div>
<div style="left:1197px;top:378px;width:24px;height:1px;background:#d49080"></div>
<div style="left:1197px;top:384px;width:24px;height:1px;background:#d49080"></div>
<div style="left:1197px;top:391px;width:24px;height:1px;background:#d49080"></div>
<div style="left:1197px;top:398px;width:24px;height:1px;background:#d49080"></div>
<div style="left:1197px;top:407px;width:24px;height:1px;background:#d49080"></div>
<div style="left:1197px;top:417px;width:24px;height:1px;background:#d49080"></div>
<div style="left:1197px;top:430px;width:24px;height:1px;background:#d49080"></div>
<div style="left:1197px;top:446px;width:24px;height:1px;background:#d49080"></div>
<div style="left:1197px;top:469px;width:24px;height:1px;background:#d49080"></div>
<div style="left:1197px;top:508px;width:24px;height:1px;background:#d49080"></div>
<div style="left:1197px;top:514px;width:24px;height:1px;background:#d49080"></div>
<div style="left:1197px;top:521px;width:24px;height:1px;background:#d49080"></div>
<div style="left:1197px;top:528px;width:24px;height:1px;background:#d49080"></div>
<div style="left:1197px;top:537px;width:24px;height:1px;background:#d49080"></div>
<div style="left:1197px;top:547px;width:24px;height:1px;background:#d49080"></div>
<div style="left:1197px;top:560px;width:24px;height:1px;background:#d49080"></div>
<div style="left:1197px;top:576px;width:24px;height:1px;background:#d49080"></div>
<div style="left:1197px;top:599px;width:24px;height:1px;background:#d49080"></div>
<div style="left:177px;top:180px;width:1px;height:589px;background:#b8b8c0"></div>
<div style="left:274px;top:180px;width:1px;height:589px;background:#b8b8c0"></div>
<div style="left:370px;top:180px;width:1px;height:589px;background:#b8b8c0"></div>
<div style="left:467px;top:180px;width:1px;height:589px;background:#b8b8c0"></div>
<div style="left:563px;top:180px;width:1px;height:589px;background:#b8b8c0"></div>
<div style="left:660px;top:180px;width:1px;height:589px;background:#b8b8c0"></div>
<div style="left:757px;top:180px;width:1px;height:589px;background:#b8b8c0"></div>
<div style="left:853px;top:180px;width:1px;height:589px;background:#b8b8c0"></div>
<div style="left:950px;top:180px;width:1px;height:589px;background:#b8b8c0"></div>
<div style="left:1046px;top:180px;width:1px;height:589px;background:#b8b8c0"></div>
<div style="left:1143px;top:180px;width:1px;height:589px;background:#b8b8c0"></div>
<div style="left:95px;top:639px;width:1127px;height:1px;background:#b8b8c0"></div>
<div style="left:80px;top:768px;width:1142px;height:1px;background:#d8d8d8"></div>
<span style="left:131.60px;top:180.00px;font-size:11px;line-height:14px;color:#f0c000;letter-spacing:-0.118px;">Eu-152</span>
<span style="left:132.49px;top:194.00px;font-size:11px;line-height:14px;color:#f0c000;letter-spacing:-0.112px;">121.74</span>
<span style="left:82.00px;top:180.00px;font-size:11px;line-height:14px;color:#e0a840;font-style:italic;font-weight:normal">7</span>
<div style="left:932px;top:708px;width:1px;height:60px;background:#f8f070"></div>
<div style="left:935px;top:708px;width:1px;height:60px;background:#f8f070"></div>
<div style="left:976px;top:731px;width:1px;height:37px;background:#f8f070"></div>
<div style="left:978px;top:731px;width:1px;height:37px;background:#f8f070"></div>
<div style="left:995px;top:731px;width:1px;height:37px;background:#f8f070"></div>
<div style="left:1005px;top:731px;width:1px;height:37px;background:#f8f070"></div>
<div style="left:1016px;top:731px;width:1px;height:37px;background:#f8f070"></div>
<div style="left:1027px;top:731px;width:2px;height:37px;background:#c0f0f8"></div>
<div style="left:1091px;top:669px;width:1px;height:37px;background:#a0e8f0"></div>
<div style="left:1090px;top:705px;width:3px;height:63px;background:#ff1010"></div>
<div style="left:1091px;top:705px;width:1px;height:63px;background:#ffc000"></div>
<div style="left:1089px;top:750px;width:1px;height:18px;background:#ff1010"></div>
<div style="left:1093px;top:742px;width:1px;height:26px;background:#ff1010"></div>
<span style="left:904.00px;top:734.00px;font-size:11px;line-height:14px;color:#f0c000;letter-spacing:0.180px;">Ra-226</span>
<span style="left:904.00px;top:748.00px;font-size:11px;line-height:14px;color:#f0c000;letter-spacing:0.167px;">2118.99</span>
<span style="left:1031.00px;top:734.00px;font-size:11px;line-height:14px;color:#f0c000;letter-spacing:0.180px;">Ra-226</span>
<span style="left:1031.00px;top:748.00px;font-size:11px;line-height:14px;color:#f0c000;letter-spacing:0.171px;">2447.31</span>
<span style="left:1096.00px;top:684.00px;font-size:11px;line-height:14px;color:#f0c000;">2614.20</span>
<span style="left:937.96px;top:772.00px;font-size:11px;line-height:14px;color:#000;letter-spacing:-0.306px;">2250</span>
<span style="left:1035.36px;top:772.00px;font-size:11px;line-height:14px;color:#000;letter-spacing:-0.306px;">2500</span>
<span style="left:1131.36px;top:772.00px;font-size:11px;line-height:14px;color:#000;letter-spacing:-0.306px;">2750</span>
<span style="left:15px;top:465px;width:40px;height:14px;font-size:12px;line-height:14px;color:#000;transform:rotate(-90deg);text-align:center">Counts</span>
<div style="left:1222px;top:177px;width:14px;height:627px;background:#f0f0f0"></div>
<svg style="left:1224px;top:184px;" width="10" height="6" viewBox="0 0 10 6"><path d="M1 5 L5 1 L9 5" fill="none" stroke="#555555" stroke-width="2"/></svg>
<svg style="left:1224px;top:792px;" width="10" height="6" viewBox="0 0 10 6"><path d="M1 1 L5 5 L9 1" fill="none" stroke="#555555" stroke-width="2"/></svg>
<div style="left:1223px;top:256px;width:12px;height:17px;background:#cdcdcd"></div>
<div style="left:22px;top:804px;width:1214px;height:1px;background:#d0d0d0"></div>
<div style="left:22px;top:805px;width:1214px;height:27px;background:#f0f0f0"></div>
<span style="left:27.00px;top:810.00px;font-size:12px;line-height:14px;color:#000;">Counts</span>
<span style="left:907.66px;top:810.00px;font-size:12px;line-height:14px;color:#2a2af0;">-1.41</span>
<div style="left:938px;top:807px;width:1px;height:22px;background:#d0d0d0"></div>
<span style="left:943.00px;top:810.00px;font-size:12px;line-height:14px;color:#000;">FWHM:</span>
<span style="left:1002.66px;top:810.00px;font-size:12px;line-height:14px;color:#2a2af0;">0.37</span>
<div style="left:1028px;top:807px;width:1px;height:22px;background:#d0d0d0"></div>
<span style="left:1033.00px;top:810.00px;font-size:12px;line-height:14px;color:#000;">ROI:</span>
<span style="left:1128.81px;top:810.00px;font-size:12px;line-height:14px;color:#2a2af0;">Simple</span>
<div style="left:1168px;top:807px;width:1px;height:22px;background:#d0d0d0"></div>
<div style="left:483px;top:127px;width:724px;height:503px;background:#f0f0f0;box-shadow:0 0 14px rgba(0,0,0,0.35)"></div>
<div style="left:483px;top:127px;width:724px;height:503px;border:1px solid #a8a8a8;background:transparent"></div>
<div style="left:484px;top:128px;width:722px;height:30px;background:#fff"></div>
<div style="left:484px;top:158px;width:722px;height:1px;background:#b0b0b0"></div>
<svg style="left:491px;top:135px;" width="16" height="16" viewBox="0 0 16 16"><path d="M0.5 10.5 L3.5 10.2 L9.6 1 L6.6 15.5 L12.6 4.8 L14.2 10.2 L16 10.5" fill="none" stroke="#f8cc18" stroke-width="1.6" stroke-linejoin="round"/><path d="M3.5 10.2 L9.6 1 L6.6 15.5 Z" fill="#fbe070" fill-opacity="0.8"/><path d="M6.6 15.5 L12.6 4.8 L11 11 Z" fill="#fbe070" fill-opacity="0.6"/></svg>
<span style="left:512.50px;top:135.50px;font-size:12px;line-height:14px;color:#999999;letter-spacing:-0.073px;">Activity information - AllZonesSew  [C:\LSRM\Work\GP\HPGe(20%)\Spe\Point25\Eu152-6649-25cm.spe]</span>
<svg style="left:1087px;top:142px;" width="11" height="2" viewBox="0 0 11 2"><path d="M0 0.5 H10" stroke="#707070" stroke-width="1"/></svg>
<svg style="left:1132px;top:137px;" width="11" height="11" viewBox="0 0 11 11"><rect x="0.5" y="0.5" width="9" height="9" fill="none" stroke="#707070" stroke-width="1"/></svg>
<svg style="left:1178px;top:137px;" width="11" height="11" viewBox="0 0 11 11"><path d="M0 0 L10 10 M10 0 L0 10" stroke="#707070" stroke-width="1"/></svg>
<div style="left:484px;top:159px;width:722px;height:149px;background:#fff"></div>
<div style="left:484px;top:308px;width:722px;height:1px;background:#a0a0a0"></div>
<span style="left:491.00px;top:163.00px;font-size:11px;line-height:14px;color:#000;letter-spacing:-0.107px;">Nuclide/Energy</span>
<span style="left:685.22px;top:163.00px;font-size:11px;line-height:14px;color:#000;letter-spacing:-0.116px;">Area</span>
<span style="left:772.23px;top:163.00px;font-size:11px;line-height:14px;color:#000;letter-spacing:-0.100px;">Area uncert.</span>
<span style="left:879.45px;top:163.00px;font-size:11px;line-height:14px;color:#000;letter-spacing:-0.092px;">Activity,Bq</span>
<svg style="left:936px;top:167px;" width="10" height="6" viewBox="0 0 10 6"><path d="M0 0 H10 L5 5.5 Z" fill="#a0a0a0"/></svg>
<span style="left:988.78px;top:163.00px;font-size:11px;line-height:14px;color:#000;letter-spacing:-0.094px;">Activity uncert.,%</span>
<span style="left:1083.50px;top:163.00px;font-size:11px;line-height:14px;color:#000;letter-spacing:-0.137px;">MDA,Bq</span>
<div style="left:627px;top:160px;width:1px;height:21px;background:#e5e5e5"></div>
<div style="left:627px;top:181px;width:1px;height:110px;background:repeating-linear-gradient(180deg,#dadada 0 1px,transparent 1px 2px)"></div>
<div style="left:713px;top:160px;width:1px;height:21px;background:#e5e5e5"></div>
<div style="left:713px;top:181px;width:1px;height:110px;background:repeating-linear-gradient(180deg,#dadada 0 1px,transparent 1px 2px)"></div>
<div style="left:837px;top:160px;width:1px;height:21px;background:#e5e5e5"></div>
<div style="left:837px;top:181px;width:1px;height:110px;background:repeating-linear-gradient(180deg,#dadada 0 1px,transparent 1px 2px)"></div>
<div style="left:953px;top:160px;width:1px;height:21px;background:#e5e5e5"></div>
<div style="left:953px;top:181px;width:1px;height:110px;background:repeating-linear-gradient(180deg,#dadada 0 1px,transparent 1px 2px)"></div>
<div style="left:1076px;top:160px;width:1px;height:21px;background:#e5e5e5"></div>
<div style="left:1076px;top:181px;width:1px;height:110px;background:repeating-linear-gradient(180deg,#dadada 0 1px,transparent 1px 2px)"></div>
<div style="left:1202px;top:160px;width:1px;height:21px;background:#e5e5e5"></div>
<div style="left:1202px;top:181px;width:1px;height:110px;background:repeating-linear-gradient(180deg,#dadada 0 1px,transparent 1px 2px)"></div>
<div style="left:485px;top:196px;width:717px;height:1px;background:repeating-linear-gradient(90deg,#dadada 0 1px,transparent 1px 2px)"></div>
<div style="left:485px;top:214px;width:717px;height:1px;background:repeating-linear-gradient(90deg,#dadada 0 1px,transparent 1px 2px)"></div>
<div style="left:485px;top:232px;width:717px;height:1px;background:repeating-linear-gradient(90deg,#dadada 0 1px,transparent 1px 2px)"></div>
<div style="left:485px;top:250px;width:717px;height:1px;background:repeating-linear-gradient(90deg,#dadada 0 1px,transparent 1px 2px)"></div>
<div style="left:485px;top:268px;width:717px;height:1px;background:repeating-linear-gradient(90deg,#dadada 0 1px,transparent 1px 2px)"></div>
<div style="left:485px;top:286px;width:717px;height:1px;background:repeating-linear-gradient(90deg,#dadada 0 1px,transparent 1px 2px)"></div>
<svg style="left:490px;top:183px;" width="9" height="9" viewBox="0 0 9 9"><rect x="0.5" y="0.5" width="8" height="8" fill="#fff" stroke="#9a9a9a"/><path d="M2 4.5 H7 M4.5 2 V7" stroke="#3a50a0"/></svg>
<svg style="left:508px;top:181px;" width="13" height="13" viewBox="0 0 13 13"><rect x="0.5" y="0.5" width="12" height="12" fill="#fff" stroke="#333"/><path d="M2.5 6.5 L5 9.5 L10.5 3" fill="none" stroke="#222" stroke-width="1.3"/></svg>
<svg style="left:528px;top:181px;" width="16" height="15" viewBox="0 0 16 15"><circle cx="5" cy="6" r="4.5" fill="#30a030"/><circle cx="11" cy="6" r="4.5" fill="#2060d0"/><circle cx="7" cy="9" r="5" fill="#f02010"/><circle cx="6.5" cy="8.5" r="2.2" fill="#f87030" fill-opacity="0.7"/></svg>
<span style="left:549.00px;top:181.00px;font-size:12px;line-height:14px;color:#000;font-weight:bold;letter-spacing:-0.057px;">Eu-152</span>
<svg style="left:490px;top:201px;" width="9" height="9" viewBox="0 0 9 9"><rect x="0.5" y="0.5" width="8" height="8" fill="#fff" stroke="#9a9a9a"/><path d="M2 4.5 H7 M4.5 2 V7" stroke="#3a50a0"/></svg>
<svg style="left:508px;top:199px;" width="13" height="13" viewBox="0 0 13 13"><rect x="0.5" y="0.5" width="12" height="12" fill="#fff" stroke="#333"/><path d="M2.5 6.5 L5 9.5 L10.5 3" fill="none" stroke="#222" stroke-width="1.3"/></svg>
<svg style="left:528px;top:199px;" width="16" height="15" viewBox="0 0 16 15"><circle cx="5" cy="6" r="4.5" fill="#30a030"/><circle cx="11" cy="6" r="4.5" fill="#2060d0"/><circle cx="7" cy="9" r="5" fill="#f02010"/><circle cx="6.5" cy="8.5" r="2.2" fill="#f87030" fill-opacity="0.7"/></svg>
<span style="left:549.00px;top:199.00px;font-size:12px;line-height:14px;color:#000;font-weight:bold;letter-spacing:-0.060px;">Ra-226</span>
<svg style="left:490px;top:219px;" width="9" height="9" viewBox="0 0 9 9"><rect x="0.5" y="0.5" width="8" height="8" fill="#fff" stroke="#9a9a9a"/><path d="M2 4.5 H7 M4.5 2 V7" stroke="#3a50a0"/></svg>
<svg style="left:508px;top:217px;" width="13" height="13" viewBox="0 0 13 13"><rect x="0.5" y="0.5" width="12" height="12" fill="#fff" stroke="#333"/><path d="M2.5 6.5 L5 9.5 L10.5 3" fill="none" stroke="#222" stroke-width="1.3"/></svg>
<svg style="left:528px;top:217px;" width="16" height="15" viewBox="0 0 16 15"><circle cx="5" cy="6" r="4.5" fill="#30a030"/><circle cx="11" cy="6" r="4.5" fill="#2060d0"/><circle cx="7" cy="9" r="5" fill="#f02010"/><circle cx="6.5" cy="8.5" r="2.2" fill="#f87030" fill-opacity="0.7"/></svg>
<span style="left:549.00px;top:217.00px;font-size:12px;line-height:14px;color:#000;font-weight:bold;letter-spacing:-0.060px;">Ra-228</span>
<svg style="left:490px;top:237px;" width="9" height="9" viewBox="0 0 9 9"><rect x="0.5" y="0.5" width="8" height="8" fill="#fff" stroke="#9a9a9a"/><path d="M2 4.5 H7 M4.5 2 V7" stroke="#3a50a0"/></svg>
<svg style="left:508px;top:235px;" width="13" height="13" viewBox="0 0 13 13"><rect x="0.5" y="0.5" width="12" height="12" fill="#fff" stroke="#333"/><path d="M2.5 6.5 L5 9.5 L10.5 3" fill="none" stroke="#222" stroke-width="1.3"/></svg>
<svg style="left:528px;top:235px;" width="16" height="15" viewBox="0 0 16 15"><circle cx="5" cy="6" r="4.5" fill="#30a030"/><circle cx="11" cy="6" r="4.5" fill="#2060d0"/><circle cx="7" cy="9" r="5" fill="#f02010"/><circle cx="6.5" cy="8.5" r="2.2" fill="#f87030" fill-opacity="0.7"/></svg>
<span style="left:549.00px;top:235.00px;font-size:12px;line-height:14px;color:#000;font-weight:bold;letter-spacing:0.055px;">Th-228</span>
<span style="left:672.78px;top:181.00px;font-size:11px;line-height:14px;color:#000;letter-spacing:-0.120px;">116500</span>
<span style="left:807.49px;top:181.00px;font-size:11px;line-height:14px;color:#000;letter-spacing:-0.123px;">2400</span>
<span style="left:914.64px;top:181.00px;font-size:12px;line-height:14px;color:#000;font-weight:bold;letter-spacing:0.200px;">47000</span>
<span style="left:1055.99px;top:181.00px;font-size:11px;line-height:14px;color:#000;letter-spacing:-0.102px;">0,6</span>
<span style="left:1085.00px;top:181.00px;font-size:11px;line-height:14px;color:#000;letter-spacing:-0.122px;">150</span>
<span style="left:689.99px;top:199.00px;font-size:11px;line-height:14px;color:#000;letter-spacing:-0.122px;">454</span>
<span style="left:819.50px;top:199.00px;font-size:11px;line-height:14px;color:#000;letter-spacing:-0.123px;">95</span>
<span style="left:921.51px;top:199.00px;font-size:12px;line-height:14px;color:#000;font-weight:bold;letter-spacing:0.200px;">2500</span>
<span style="left:1058.99px;top:199.00px;font-size:11px;line-height:14px;color:#000;letter-spacing:-0.123px;">19</span>
<span style="left:1085.00px;top:199.00px;font-size:11px;line-height:14px;color:#000;letter-spacing:-0.122px;">600</span>
<span style="left:696.00px;top:217.00px;font-size:11px;line-height:14px;color:#000;letter-spacing:-0.123px;">33</span>
<span style="left:819.50px;top:217.00px;font-size:11px;line-height:14px;color:#000;letter-spacing:-0.123px;">15</span>
<span style="left:928.38px;top:217.00px;font-size:12px;line-height:14px;color:#000;font-weight:bold;letter-spacing:0.200px;">290</span>
<span style="left:1058.99px;top:217.00px;font-size:11px;line-height:14px;color:#000;letter-spacing:-0.123px;">13</span>
<span style="left:1085.00px;top:217.00px;font-size:11px;line-height:14px;color:#000;letter-spacing:-0.122px;">120</span>
<span style="left:704.34px;top:235.00px;font-size:11px;line-height:14px;color:#000;">-</span>
<span style="left:827.84px;top:235.00px;font-size:11px;line-height:14px;color:#000;">-</span>
<span style="left:945.00px;top:235.00px;font-size:12px;line-height:14px;color:#000;font-weight:bold;">-</span>
<span style="left:1067.34px;top:235.00px;font-size:11px;line-height:14px;color:#000;">-</span>
<div style="left:484px;top:291px;width:722px;height:17px;background:#f0f0f0"></div>
<div style="left:484px;top:292px;width:599px;height:15px;background:#cdcdcd"></div>
<svg style="left:1192px;top:294px;" width="7" height="10" viewBox="0 0 7 10"><path d="M1 1 L5 5 L1 9" fill="none" stroke="#555555" stroke-width="2"/></svg>
<div style="left:484px;top:342px;width:722px;height:1px;background:#a0a0a0"></div>
<div style="left:484px;top:343px;width:722px;height:1px;background:#fff"></div>
<div style="left:880px;top:350px;width:326px;height:1px;background:#dcdcdc"></div>
<div style="left:880px;top:351px;width:326px;height:1px;background:#fff"></div>
<span style="left:860.00px;top:344.00px;font-size:11px;line-height:14px;color:#000;letter-spacing:-0.094px;">Recalculate activity on:</span>
<span style="left:884.05px;top:375.00px;font-size:11px;line-height:14px;color:#000;letter-spacing:-0.115px;">Measurement date</span>
<svg style="left:1014px;top:375px;" width="14" height="14" viewBox="0 0 14 14"><circle cx="7" cy="7" r="6.2" fill="#fff" stroke="#333" stroke-width="1"/></svg>
<span style="left:1031.00px;top:375.00px;font-size:11px;line-height:14px;color:#000;letter-spacing:-0.108px;">Sampling begin</span>
<div style="left:860px;top:407px;width:147px;height:21px;background:#fff;border:1px solid #7a7a7a"></div>
<span style="left:875.99px;top:410.00px;font-size:11px;line-height:14px;color:#000;letter-spacing:0.302px;">1 декабря  2008 г.</span>
<svg style="left:993px;top:415px;" width="9" height="5" viewBox="0 0 9 5"><path d="M0.5 0.5 L4.5 4.5 L8.5 0.5" fill="none" stroke="#404040" stroke-width="1.1"/></svg>
<div style="left:1014px;top:407px;width:81px;height:21px;background:#fff;border:1px solid #7a7a7a"></div>
<span style="left:1021.00px;top:410.00px;font-size:11px;line-height:14px;color:#000;letter-spacing:-0.105px;">9:37:15</span>
<div style="left:1095px;top:406px;width:102px;height:23px;background:#e1e1e1;border:1px solid #adadad"></div>
<span style="left:1127.12px;top:410.50px;font-size:11px;line-height:14px;color:#000;letter-spacing:-0.110px;">Restore</span>
<div style="left:484px;top:452px;width:722px;height:1px;background:#a0a0a0"></div>
<div style="left:484px;top:453px;width:722px;height:1px;background:#fff"></div>
<div style="left:860px;top:460px;width:120px;height:21px;background:#fff;border:1px solid #7a7a7a"></div>
<svg style="left:967px;top:468px;" width="9" height="5" viewBox="0 0 9 5"><path d="M0.5 0.5 L4.5 4.5 L8.5 0.5" fill="none" stroke="#404040" stroke-width="1.1"/></svg>
<div style="left:986px;top:461px;width:102px;height:23px;background:#cccccc;border:1px solid #bfbfbf"></div>
<span style="left:1024.70px;top:465.50px;font-size:11px;line-height:14px;color:#838383;letter-spacing:-0.125px;">Save</span>
<div style="left:1096px;top:461px;width:102px;height:23px;background:#e1e1e1;border:1px solid #adadad"></div>
<span style="left:1130.81px;top:465.50px;font-size:11px;line-height:14px;color:#000;letter-spacing:-0.110px;">Report</span>
<span style="left:848.66px;top:496.00px;font-size:11px;line-height:14px;color:#6d6d6d;letter-spacing:-0.086px;">Identification for lines</span>
<div style="left:1019px;top:565px;width:178px;height:23px;background:#e1e1e1;border:2px solid #0078d7"></div>
<span style="left:1045.94px;top:569.50px;font-size:11px;line-height:14px;color:#000;letter-spacing:-0.097px;">Expert identification mode</span>
<div style="left:830px;top:597px;width:96px;height:23px;background:#e1e1e1;border:1px solid #adadad"></div>
<span style="left:866.90px;top:601.50px;font-size:11px;line-height:14px;color:#000;letter-spacing:-0.113px;">Step</span>
<div style="left:934px;top:597px;width:95px;height:23px;background:#e1e1e1;border:1px solid #adadad"></div>
<span style="left:939.21px;top:601.50px;font-size:11px;line-height:14px;color:#000;letter-spacing:-0.108px;">Go one step back</span>
<div style="left:1091px;top:597px;width:107px;height:23px;background:#e1e1e1;border:1px solid #adadad"></div>
<span style="left:1130.72px;top:601.50px;font-size:11px;line-height:14px;color:#000;letter-spacing:-0.113px;">Close</span>
<div style="left:44px;top:202px;width:858px;height:664px;background:#f0f0f0;box-shadow:0 0 14px rgba(0,0,0,0.4)"></div>
<div style="left:44px;top:202px;width:858px;height:664px;border:1px solid #a0a0a0;background:transparent"></div>
<div style="left:45px;top:203px;width:856px;height:30px;background:#fff"></div>
<svg style="left:53px;top:209px;" width="16" height="16" viewBox="0 0 16 16"><path d="M0.5 10.5 L3.5 10.2 L9.6 1 L6.6 15.5 L12.6 4.8 L14.2 10.2 L16 10.5" fill="none" stroke="#f8cc18" stroke-width="1.6" stroke-linejoin="round"/><path d="M3.5 10.2 L9.6 1 L6.6 15.5 Z" fill="#fbe070" fill-opacity="0.8"/><path d="M6.6 15.5 L12.6 4.8 L11 11 Z" fill="#fbe070" fill-opacity="0.6"/></svg>
<span style="left:74.00px;top:210.50px;font-size:12px;line-height:14px;color:#999999;letter-spacing:-0.086px;">Identification - [C:\LSRM\Work\GP\HPGe(20%)\Spe\Point25\Eu152-6649-25cm.spe]</span>
<svg style="left:782px;top:217px;" width="11" height="2" viewBox="0 0 11 2"><path d="M0 0.5 H10" stroke="#707070" stroke-width="1"/></svg>
<svg style="left:827px;top:212px;" width="11" height="11" viewBox="0 0 11 11"><rect x="0.5" y="0.5" width="9" height="9" fill="none" stroke="#707070" stroke-width="1"/></svg>
<svg style="left:872px;top:212px;" width="11" height="11" viewBox="0 0 11 11"><path d="M0 0 L10 10 M10 0 L0 10" stroke="#707070" stroke-width="1"/></svg>
<div style="left:47px;top:255px;width:621px;height:334px;background:#fff;border:1px solid #d9d9d9"></div>
<div style="left:188px;top:236px;width:118px;height:20px;background:#f0f0f0;border:1px solid #d9d9d9"></div>
<div style="left:47px;top:234px;width:142px;height:23px;background:#fff;border:1px solid #d9d9d9;border-bottom:none"></div>
<svg style="left:55px;top:237px;" width="15" height="13" viewBox="0 0 15 13"><path d="M0 0.5 H10 M4 12.5 H14" stroke="#000" stroke-width="1"/><path d="M6.5 0 V9" stroke="#000"/><path d="M4.5 7.5 L6.5 11 L8.5 7.5 Z" fill="#000"/></svg>
<span style="left:75.00px;top:238.50px;font-size:11px;line-height:14px;color:#000;letter-spacing:-0.020px;">Lines for identification</span>
<svg style="left:194px;top:238px;" width="16" height="15" viewBox="0 0 16 15"><circle cx="5" cy="6" r="4.5" fill="#30a030"/><circle cx="11" cy="6" r="4.5" fill="#2060d0"/><circle cx="7" cy="9" r="5" fill="#f02010"/><circle cx="6.5" cy="8.5" r="2.2" fill="#f87030" fill-opacity="0.7"/></svg>
<span style="left:214.00px;top:239.50px;font-size:11px;line-height:14px;color:#000;letter-spacing:-0.059px;">Identified nuclides</span>
<div style="left:50px;top:259px;width:616px;height:327px;background:#fff;border:1px solid #a8a8a8"></div>
<span style="left:57.00px;top:264.00px;font-size:11px;line-height:14px;color:#000;letter-spacing:-0.105px;">Line energy</span>
<span style="left:501.00px;top:264.00px;font-size:11px;line-height:14px;color:#000;letter-spacing:-0.082px;">S/Crit...</span>
<svg style="left:546px;top:268px;" width="10" height="6" viewBox="0 0 10 6"><path d="M0 0 H10 L5 5.5 Z" fill="#a0a0a0"/></svg>
<span style="left:570.00px;top:264.00px;font-size:11px;line-height:14px;color:#000;letter-spacing:-0.160px;">Nuclide/Descriptor</span>
<div style="left:495px;top:262px;width:1px;height:19px;background:#e5e5e5"></div>
<div style="left:564px;top:262px;width:1px;height:19px;background:#e5e5e5"></div>
<div style="left:51px;top:280px;width:614px;height:18px;background:#efefef"></div>
<div style="left:51px;top:280px;width:613px;height:288px;overflow:hidden;">
<svg style="left:2px;top:4px;" width="10" height="10" viewBox="0 0 10 10"><rect x="0.5" y="0.5" width="9" height="9" fill="#f4f4f4" stroke="#9a9a9a"/><path d="M2.5 5 H7.5" stroke="#3a50a0"/></svg>
<span style="left:17.00px;top:2.00px;font-size:11px;line-height:14px;color:#000;letter-spacing:-0.112px;">39.683</span>
<span style="left:450.00px;top:2.00px;font-size:11px;line-height:14px;color:#000;letter-spacing:0.229px;">1.633 ±0....</span>
<div style="left:0px;top:17px;width:613px;height:1px;background:repeating-linear-gradient(90deg,#dadada 0 1px,transparent 1px 2px)"></div>
<svg style="left:27px;top:20px;" width="15" height="13" viewBox="0 0 15 13"><path d="M0 0.5 H10 M4 12.5 H14" stroke="#000" stroke-width="1"/><path d="M6.5 0 V9" stroke="#000"/><path d="M4.5 7.5 L6.5 11 L8.5 7.5 Z" fill="#000"/></svg>
<span style="left:45.50px;top:20.00px;font-size:11px;line-height:14px;color:#000;letter-spacing:-0.108px;">39.755 ±0.012</span>
<span style="left:450.00px;top:20.00px;font-size:11px;line-height:14px;color:#000;letter-spacing:0.260px;">1.08 ±0.12</span>
<svg style="left:519px;top:20px;" width="16" height="15" viewBox="0 0 16 15"><circle cx="5" cy="6" r="4.5" fill="#30a030"/><circle cx="11" cy="6" r="4.5" fill="#2060d0"/><circle cx="7" cy="9" r="5" fill="#f02010"/><circle cx="6.5" cy="8.5" r="2.2" fill="#f87030" fill-opacity="0.7"/></svg>
<span style="left:537.00px;top:20.00px;font-size:11px;line-height:14px;color:#000;letter-spacing:-0.129px;">Rh-103M</span>
<span style="left:593.00px;top:20.00px;font-size:11px;line-height:14px;color:#000;letter-spacing:0.107px;">56.1</span>
<div style="left:0px;top:35px;width:613px;height:1px;background:repeating-linear-gradient(90deg,#dadada 0 1px,transparent 1px 2px)"></div>
<svg style="left:27px;top:38px;" width="15" height="13" viewBox="0 0 15 13"><path d="M0 0.5 H10 M4 12.5 H14" stroke="#000" stroke-width="1"/><path d="M6.5 0 V9" stroke="#000"/><path d="M4.5 7.5 L6.5 11 L8.5 7.5 Z" fill="#000"/></svg>
<span style="left:45.50px;top:38.00px;font-size:11px;line-height:14px;color:#000;letter-spacing:-0.108px;">40.118 ±0.0003</span>
<span style="left:450.00px;top:38.00px;font-size:11px;line-height:14px;color:#000;letter-spacing:0.260px;">0.90 ±0.06</span>
<svg style="left:519px;top:38px;" width="16" height="15" viewBox="0 0 16 15"><circle cx="5" cy="6" r="4.5" fill="#30a030"/><circle cx="11" cy="6" r="4.5" fill="#2060d0"/><circle cx="7" cy="9" r="5" fill="#f02010"/><circle cx="6.5" cy="8.5" r="2.2" fill="#f87030" fill-opacity="0.7"/></svg>
<span style="left:537.00px;top:38.00px;font-size:11px;line-height:14px;color:#000;letter-spacing:-0.118px;">Eu-152</span>
<span style="left:585.00px;top:38.00px;font-size:11px;line-height:14px;color:#000;letter-spacing:0.112px;">13.517</span>
<div style="left:0px;top:53px;width:613px;height:1px;background:repeating-linear-gradient(90deg,#dadada 0 1px,transparent 1px 2px)"></div>
<svg style="left:27px;top:56px;" width="15" height="13" viewBox="0 0 15 13"><path d="M0 0.5 H10 M4 12.5 H14" stroke="#000" stroke-width="1"/><path d="M6.5 0 V9" stroke="#000"/><path d="M4.5 7.5 L6.5 11 L8.5 7.5 Z" fill="#000"/></svg>
<span style="left:45.50px;top:56.00px;font-size:11px;line-height:14px;color:#000;letter-spacing:-0.106px;">40.09 ±0.05</span>
<span style="left:450.00px;top:56.00px;font-size:11px;line-height:14px;color:#000;letter-spacing:0.260px;">0.56 ±0.05</span>
<svg style="left:519px;top:56px;" width="16" height="15" viewBox="0 0 16 15"><circle cx="5" cy="6" r="4.5" fill="#30a030"/><circle cx="11" cy="6" r="4.5" fill="#2060d0"/><circle cx="7" cy="9" r="5" fill="#f02010"/><circle cx="6.5" cy="8.5" r="2.2" fill="#f87030" fill-opacity="0.7"/></svg>
<span style="left:537.00px;top:56.00px;font-size:11px;line-height:14px;color:#000;letter-spacing:-0.120px;">Ra-225</span>
<span style="left:585.50px;top:56.00px;font-size:11px;line-height:14px;color:#000;letter-spacing:0.110px;">14.90</span>
<div style="left:0px;top:71px;width:613px;height:1px;background:repeating-linear-gradient(90deg,#dadada 0 1px,transparent 1px 2px)"></div>
<svg style="left:27px;top:74px;" width="15" height="13" viewBox="0 0 15 13"><path d="M0 0.5 H10 M4 12.5 H14" stroke="#000" stroke-width="1"/><path d="M6.5 0 V9" stroke="#000"/><path d="M4.5 7.5 L6.5 11 L8.5 7.5 Z" fill="#000"/></svg>
<span style="left:45.50px;top:74.00px;font-size:11px;line-height:14px;color:#000;letter-spacing:-0.102px;">40.0 ±1.0</span>
<span style="left:450.00px;top:74.00px;font-size:11px;line-height:14px;color:#000;letter-spacing:0.260px;">0.55 ±0.05</span>
<svg style="left:519px;top:74px;" width="16" height="15" viewBox="0 0 16 15"><circle cx="5" cy="6" r="4.5" fill="#30a030"/><circle cx="11" cy="6" r="4.5" fill="#2060d0"/><circle cx="7" cy="9" r="5" fill="#f02010"/><circle cx="6.5" cy="8.5" r="2.2" fill="#f87030" fill-opacity="0.7"/></svg>
<span style="left:537.00px;top:74.00px;font-size:11px;line-height:14px;color:#000;letter-spacing:-0.120px;">Ra-225</span>
<span style="left:585.50px;top:74.00px;font-size:11px;line-height:14px;color:#000;letter-spacing:0.110px;">14.90</span>
<div style="left:0px;top:89px;width:613px;height:1px;background:repeating-linear-gradient(90deg,#dadada 0 1px,transparent 1px 2px)"></div>
<svg style="left:27px;top:92px;" width="15" height="13" viewBox="0 0 15 13"><path d="M0 0.5 H10 M4 12.5 H14" stroke="#000" stroke-width="1"/><path d="M6.5 0 V9" stroke="#000"/><path d="M4.5 7.5 L6.5 11 L8.5 7.5 Z" fill="#000"/></svg>
<span style="left:45.50px;top:92.00px;font-size:11px;line-height:14px;color:#000;letter-spacing:-0.112px;">39.522</span>
<span style="left:450.00px;top:92.00px;font-size:11px;line-height:14px;color:#000;letter-spacing:0.260px;">0.48 ±0.03</span>
<svg style="left:519px;top:92px;" width="16" height="15" viewBox="0 0 16 15"><circle cx="5" cy="6" r="4.5" fill="#30a030"/><circle cx="11" cy="6" r="4.5" fill="#2060d0"/><circle cx="7" cy="9" r="5" fill="#f02010"/><circle cx="6.5" cy="8.5" r="2.2" fill="#f87030" fill-opacity="0.7"/></svg>
<span style="left:537.00px;top:92.00px;font-size:11px;line-height:14px;color:#000;letter-spacing:-0.118px;">Eu-152</span>
<span style="left:585.00px;top:92.00px;font-size:11px;line-height:14px;color:#000;letter-spacing:0.112px;">13.517</span>
<div style="left:0px;top:107px;width:613px;height:1px;background:repeating-linear-gradient(90deg,#dadada 0 1px,transparent 1px 2px)"></div>
<svg style="left:16px;top:110px;" width="15" height="13" viewBox="0 0 15 13"><path d="M0 0.5 H10 M4 12.5 H14" stroke="#000" stroke-width="1"/><path d="M6.5 0 V9" stroke="#000"/><path d="M4.5 7.5 L6.5 11 L8.5 7.5 Z" fill="#000"/></svg>
<span style="left:34.50px;top:110.00px;font-size:11px;line-height:14px;color:#000;letter-spacing:-0.112px;">45.141</span>
<span style="left:450.00px;top:110.00px;font-size:11px;line-height:14px;color:#000;letter-spacing:0.229px;">0.650 ±0....</span>
<div style="left:0px;top:125px;width:613px;height:1px;background:repeating-linear-gradient(90deg,#dadada 0 1px,transparent 1px 2px)"></div>
<svg style="left:16px;top:128px;" width="15" height="13" viewBox="0 0 15 13"><path d="M0 0.5 H10 M4 12.5 H14" stroke="#000" stroke-width="1"/><path d="M6.5 0 V9" stroke="#000"/><path d="M4.5 7.5 L6.5 11 L8.5 7.5 Z" fill="#000"/></svg>
<span style="left:34.50px;top:128.00px;font-size:11px;line-height:14px;color:#000;letter-spacing:-0.112px;">46.413</span>
<span style="left:450.00px;top:128.00px;font-size:11px;line-height:14px;color:#000;letter-spacing:0.229px;">0.183 ±0....</span>
<div style="left:0px;top:143px;width:613px;height:1px;background:repeating-linear-gradient(90deg,#dadada 0 1px,transparent 1px 2px)"></div>
<svg style="left:16px;top:146px;" width="15" height="13" viewBox="0 0 15 13"><path d="M0 0.5 H10 M4 12.5 H14" stroke="#000" stroke-width="1"/><path d="M6.5 0 V9" stroke="#000"/><path d="M4.5 7.5 L6.5 11 L8.5 7.5 Z" fill="#000"/></svg>
<span style="left:34.50px;top:146.00px;font-size:11px;line-height:14px;color:#000;letter-spacing:-0.114px;">510.848</span>
<span style="left:450.00px;top:146.00px;font-size:11px;line-height:14px;color:#000;letter-spacing:0.260px;">0.14 ±0.03</span>
<div style="left:0px;top:161px;width:613px;height:1px;background:repeating-linear-gradient(90deg,#dadada 0 1px,transparent 1px 2px)"></div>
<svg style="left:16px;top:164px;" width="15" height="13" viewBox="0 0 15 13"><path d="M0 0.5 H10 M4 12.5 H14" stroke="#000" stroke-width="1"/><path d="M6.5 0 V9" stroke="#000"/><path d="M4.5 7.5 L6.5 11 L8.5 7.5 Z" fill="#000"/></svg>
<span style="left:34.50px;top:164.00px;font-size:11px;line-height:14px;color:#000;letter-spacing:-0.115px;">2614.198</span>
<span style="left:450.00px;top:164.00px;font-size:11px;line-height:14px;color:#000;letter-spacing:0.260px;">0.12 ±0.03</span>
<div style="left:0px;top:179px;width:613px;height:1px;background:repeating-linear-gradient(90deg,#dadada 0 1px,transparent 1px 2px)"></div>
<div style="left:444px;top:18px;width:1px;height:269px;background:repeating-linear-gradient(180deg,#dadada 0 1px,transparent 1px 2px)"></div>
<div style="left:513px;top:18px;width:1px;height:269px;background:repeating-linear-gradient(180deg,#dadada 0 1px,transparent 1px 2px)"></div>
</div>
<div style="left:51px;top:568px;width:614px;height:17px;background:#f0f0f0"></div>
<div style="left:69px;top:569px;width:452px;height:15px;background:#cdcdcd"></div>
<svg style="left:56px;top:571px;" width="7" height="10" viewBox="0 0 7 10"><path d="M6 1 L2 5 L6 9" fill="none" stroke="#555555" stroke-width="2"/></svg>
<svg style="left:652px;top:571px;" width="7" height="10" viewBox="0 0 7 10"><path d="M1 1 L5 5 L1 9" fill="none" stroke="#555555" stroke-width="2"/></svg>
<div style="left:47px;top:614px;width:621px;height:248px;background:#fff;border:1px solid #d9d9d9"></div>
<div style="left:48px;top:596px;width:43px;height:20px;background:#f0f0f0;border:1px solid #d9d9d9;border-bottom:none"></div>
<span style="left:54.00px;top:598.50px;font-size:11px;line-height:14px;color:#000;letter-spacing:-0.105px;">Lines</span>
<div style="left:51px;top:618px;width:615px;height:241px;background:#fff;border:1px solid #a8a8a8"></div>
<div style="left:52px;top:623px;width:595px;height:1px;background:repeating-linear-gradient(90deg,#dadada 0 1px,transparent 1px 2px)"></div>
<span style="left:61.00px;top:626.00px;font-size:11px;line-height:14px;color:#000;letter-spacing:0.111px;">28-01-2021 1:21:09.948</span>
<span style="left:222.50px;top:626.00px;font-size:11px;line-height:14px;color:#000;letter-spacing:-0.100px;">Load data for Y-83</span>
<div style="left:52px;top:641px;width:595px;height:1px;background:repeating-linear-gradient(90deg,#dadada 0 1px,transparent 1px 2px)"></div>
<span style="left:61.00px;top:644.00px;font-size:11px;line-height:14px;color:#000;letter-spacing:0.111px;">28-01-2021 1:21:10.013</span>
<span style="left:222.50px;top:644.00px;font-size:11px;line-height:14px;color:#000;letter-spacing:-0.100px;">Load data for Y-84</span>
<div style="left:52px;top:659px;width:595px;height:1px;background:repeating-linear-gradient(90deg,#dadada 0 1px,transparent 1px 2px)"></div>
<span style="left:61.00px;top:662.00px;font-size:11px;line-height:14px;color:#000;letter-spacing:0.111px;">28-01-2021 1:21:10.072</span>
<span style="left:222.50px;top:662.00px;font-size:11px;line-height:14px;color:#000;letter-spacing:-0.100px;">Load data for Y-99</span>
<div style="left:52px;top:677px;width:595px;height:1px;background:repeating-linear-gradient(90deg,#dadada 0 1px,transparent 1px 2px)"></div>
<span style="left:61.00px;top:680.00px;font-size:11px;line-height:14px;color:#000;letter-spacing:0.111px;">28-01-2021 1:21:10.109</span>
<span style="left:222.50px;top:680.00px;font-size:11px;line-height:14px;color:#000;letter-spacing:-0.103px;">Load data for Yb-163</span>
<div style="left:52px;top:695px;width:595px;height:1px;background:repeating-linear-gradient(90deg,#dadada 0 1px,transparent 1px 2px)"></div>
<span style="left:61.00px;top:698.00px;font-size:11px;line-height:14px;color:#000;letter-spacing:0.111px;">28-01-2021 1:21:10.184</span>
<span style="left:222.50px;top:698.00px;font-size:11px;line-height:14px;color:#000;letter-spacing:-0.100px;">Load data for Zr-101</span>
<div style="left:52px;top:713px;width:595px;height:1px;background:repeating-linear-gradient(90deg,#dadada 0 1px,transparent 1px 2px)"></div>
<span style="left:61.00px;top:716.00px;font-size:11px;line-height:14px;color:#000;letter-spacing:0.111px;">28-01-2021 1:21:10.248</span>
<span style="left:222.50px;top:716.00px;font-size:11px;line-height:14px;color:#000;letter-spacing:-0.093px;">10 - lines deleted</span>
<div style="left:52px;top:731px;width:595px;height:1px;background:repeating-linear-gradient(90deg,#dadada 0 1px,transparent 1px 2px)"></div>
<span style="left:61.00px;top:734.00px;font-size:11px;line-height:14px;color:#000;letter-spacing:0.111px;">28-01-2021 1:21:10.414</span>
<span style="left:222.50px;top:734.00px;font-size:11px;line-height:14px;color:#118811;letter-spacing:-0.093px;">Start identification by MDA...</span>
<div style="left:52px;top:749px;width:595px;height:1px;background:repeating-linear-gradient(90deg,#dadada 0 1px,transparent 1px 2px)"></div>
<span style="left:61.00px;top:752.00px;font-size:11px;line-height:14px;color:#000;letter-spacing:0.111px;">28-01-2021 1:21:10.415</span>
<span style="left:222.50px;top:752.00px;font-size:11px;line-height:14px;color:#000;letter-spacing:-0.102px;">Calculate MDA for 515 nuclides</span>
<div style="left:52px;top:767px;width:595px;height:1px;background:repeating-linear-gradient(90deg,#dadada 0 1px,transparent 1px 2px)"></div>
<span style="left:61.00px;top:770.00px;font-size:11px;line-height:14px;color:#000;letter-spacing:0.148px;">28-01-2021 1:21:11.636</span>
<span style="left:222.50px;top:770.00px;font-size:11px;line-height:14px;color:#000;letter-spacing:-0.093px;">After identification by MDA left 79 nuclides</span>
<div style="left:52px;top:785px;width:595px;height:1px;background:repeating-linear-gradient(90deg,#dadada 0 1px,transparent 1px 2px)"></div>
<span style="left:61.00px;top:788.00px;font-size:11px;line-height:14px;color:#000;letter-spacing:0.148px;">28-01-2021 1:21:11.793</span>
<span style="left:222.50px;top:788.00px;font-size:11px;line-height:14px;color:#118811;letter-spacing:-0.092px;">Calculate activity for 79 nuclides</span>
<div style="left:52px;top:803px;width:595px;height:1px;background:repeating-linear-gradient(90deg,#dadada 0 1px,transparent 1px 2px)"></div>
<span style="left:61.00px;top:806.00px;font-size:11px;line-height:14px;color:#000;letter-spacing:0.111px;">28-01-2021 1:21:13.168</span>
<span style="left:222.50px;top:806.00px;font-size:11px;line-height:14px;color:#000;letter-spacing:-0.086px;">Filter identified data by area criteria...</span>
<div style="left:52px;top:821px;width:595px;height:1px;background:repeating-linear-gradient(90deg,#dadada 0 1px,transparent 1px 2px)"></div>
<span style="left:61.00px;top:824.00px;font-size:11px;line-height:14px;color:#000;letter-spacing:0.111px;">28-01-2021 1:21:13.168</span>
<span style="left:222.50px;top:824.00px;font-size:11px;line-height:14px;color:#000;letter-spacing:-0.097px;">For peak with energy - 39.68 was 125 lines left 5</span>
<div style="left:52px;top:839px;width:595px;height:1px;background:repeating-linear-gradient(90deg,#dadada 0 1px,transparent 1px 2px)"></div>
<span style="left:61.00px;top:842.00px;font-size:11px;line-height:14px;color:#000;letter-spacing:0.111px;">28-01-2021 1:21:13.196</span>
<span style="left:222.50px;top:842.00px;font-size:11px;line-height:14px;color:#000;letter-spacing:-0.098px;">End complex identification</span>
<div style="left:52px;top:857px;width:595px;height:1px;background:repeating-linear-gradient(90deg,#dadada 0 1px,transparent 1px 2px)"></div>
<div style="left:647px;top:620px;width:16px;height:238px;background:#f0f0f0"></div>
<div style="left:648px;top:824px;width:14px;height:18px;background:#cdcdcd"></div>
<svg style="left:650px;top:626px;" width="10" height="6" viewBox="0 0 10 6"><path d="M1 5 L5 1 L9 5" fill="none" stroke="#555555" stroke-width="2"/></svg>
<svg style="left:650px;top:847px;" width="10" height="6" viewBox="0 0 10 6"><path d="M1 1 L5 5 L9 1" fill="none" stroke="#555555" stroke-width="2"/></svg>
<div style="left:45px;top:594px;width:625px;height:1px;background:#ffffff"></div>
<div style="left:670px;top:233px;width:1px;height:632px;background:#a0a0a0"></div>
<span style="left:677.00px;top:250.00px;font-size:11px;line-height:14px;color:#000;letter-spacing:-0.070px;">Tolerance (keV):</span>
<div style="left:820px;top:247px;width:76px;height:21px;background:#fff;border:1px solid #7a7a7a"></div>
<span style="left:847.99px;top:250.00px;font-size:11px;line-height:14px;color:#000;letter-spacing:-0.110px;">1.500</span>
<div style="left:877px;top:248px;width:18px;height:19px;background:#e1e1e1;border:1px solid #adadad"></div>
<svg style="left:878px;top:249px;" width="16" height="17" viewBox="0 0 16 17"><path d="M1 16 L15 1" stroke="#9a9a9a"/><path d="M4 9 V2 M2 4 L4 1.5 L6 4" stroke="#000" stroke-width="1.4" fill="none"/><path d="M12 8 V15 M10 13 L12 15.5 L14 13" stroke="#000" stroke-width="1.4" fill="none"/></svg>
<div style="left:676px;top:280px;width:219px;height:105px;border:1px solid #dcdcdc"></div>
<div style="left:681px;top:274px;width:32px;height:15px;background:#f0f0f0"></div>
<span style="left:683.50px;top:274.00px;font-size:11px;line-height:14px;color:#000;letter-spacing:-0.081px;">Filter</span>
<svg style="left:686px;top:294px;" width="13" height="13" viewBox="0 0 13 13"><rect x="0.5" y="0.5" width="12" height="12" fill="#fff" stroke="#333"/><path d="M2.5 6.5 L5 9.5 L10.5 3" fill="none" stroke="#222" stroke-width="1.3"/></svg>
<span style="left:702.00px;top:293.00px;font-size:11px;line-height:14px;color:#000;letter-spacing:-0.130px;">by MDA</span>
<svg style="left:686px;top:314px;" width="13" height="13" viewBox="0 0 13 13"><rect x="0.5" y="0.5" width="12" height="12" fill="#fff" stroke="#c8c8c8"/></svg>
<span style="left:702.00px;top:313.50px;font-size:11px;line-height:14px;color:#6d6d6d;letter-spacing:-0.105px;">by decay chain</span>
<svg style="left:686px;top:336px;" width="13" height="13" viewBox="0 0 13 13"><rect x="0.5" y="0.5" width="12" height="12" fill="#fff" stroke="#333"/><path d="M2.5 6.5 L5 9.5 L10.5 3" fill="none" stroke="#222" stroke-width="1.3"/></svg>
<span style="left:702.00px;top:335.00px;font-size:11px;line-height:14px;color:#000;letter-spacing:-0.105px;">by area</span>
<svg style="left:686px;top:356px;" width="13" height="13" viewBox="0 0 13 13"><rect x="0.5" y="0.5" width="12" height="12" fill="#fff" stroke="#333"/><path d="M2.5 6.5 L5 9.5 L10.5 3" fill="none" stroke="#222" stroke-width="1.3"/></svg>
<span style="left:702.00px;top:355.50px;font-size:11px;line-height:14px;color:#000;letter-spacing:-0.092px;">by uniquely identified lines</span>
<svg style="left:677px;top:400px;" width="13" height="13" viewBox="0 0 13 13"><rect x="0.5" y="0.5" width="12" height="12" fill="#fff" stroke="#333"/><path d="M2.5 6.5 L5 9.5 L10.5 3" fill="none" stroke="#222" stroke-width="1.3"/></svg>
<span style="left:692.50px;top:400.00px;font-size:11px;line-height:14px;color:#000;letter-spacing:-0.098px;">Show identifed lines</span>
<div style="left:676px;top:455px;width:217px;height:49px;background:#e1e1e1;border:2px solid #0078d7"></div>
<span style="left:731.75px;top:466.00px;font-size:11px;line-height:14px;color:#000;letter-spacing:-0.098px;">Complex identification</span>
<span style="left:728.41px;top:479.00px;font-size:11px;line-height:14px;color:#000;letter-spacing:-0.095px;">Identify line 39.683 keV</span>
<div style="left:676px;top:512px;width:217px;height:49px;background:#e1e1e1;border:1px solid #adadad"></div>
<span style="left:710.32px;top:523.00px;font-size:11px;line-height:14px;color:#000;letter-spacing:-0.101px;">Complex identification + Decay</span>
<span style="left:728.41px;top:536.00px;font-size:11px;line-height:14px;color:#000;letter-spacing:-0.095px;">Identify line 39.683 keV</span>
<div style="left:676px;top:586px;width:218px;height:23px;background:#e1e1e1;border:1px solid #adadad"></div>
<span style="left:728.91px;top:590.50px;font-size:11px;line-height:14px;color:#000;letter-spacing:-0.095px;">Identify line 39.683 keV</span>
<div style="left:676px;top:617px;width:218px;height:23px;background:#e1e1e1;border:1px solid #adadad"></div>
<span style="left:748.13px;top:621.50px;font-size:11px;line-height:14px;color:#000;letter-spacing:-0.084px;">Identify all lines</span>
<div style="left:678px;top:648px;width:217px;height:23px;background:#e1e1e1;border:1px solid #adadad"></div>
<span style="left:735.54px;top:652.50px;font-size:11px;line-height:14px;color:#000;letter-spacing:-0.099px;">Identification by MDA</span>
<div style="left:678px;top:679px;width:217px;height:23px;background:#e1e1e1;border:1px solid #adadad"></div>
<span style="left:757.74px;top:683.50px;font-size:11px;line-height:14px;color:#000;letter-spacing:-0.090px;">Calc activity</span>
<div style="left:676px;top:710px;width:217px;height:23px;background:#e1e1e1;border:1px solid #adadad"></div>
<span style="left:716.73px;top:714.50px;font-size:11px;line-height:14px;color:#000;letter-spacing:-0.095px;">Identification by decay chain</span>
<div style="left:677px;top:771px;width:217px;height:23px;background:#e1e1e1;border:1px solid #adadad"></div>
<span style="left:772.62px;top:775.50px;font-size:11px;line-height:14px;color:#000;letter-spacing:-0.105px;">Clear</span>
<div style="left:678px;top:802px;width:218px;height:23px;background:#e1e1e1;border:1px solid #adadad"></div>
<span style="left:716.24px;top:806.50px;font-size:11px;line-height:14px;color:#000;letter-spacing:-0.093px;">Add 3 nuclides to ident library</span>
<div style="left:814px;top:833px;width:80px;height:23px;background:#e1e1e1;border:1px solid #adadad"></div>
<span style="left:840.22px;top:837.50px;font-size:11px;line-height:14px;color:#000;letter-spacing:-0.113px;">Close</span>
</body></html>
